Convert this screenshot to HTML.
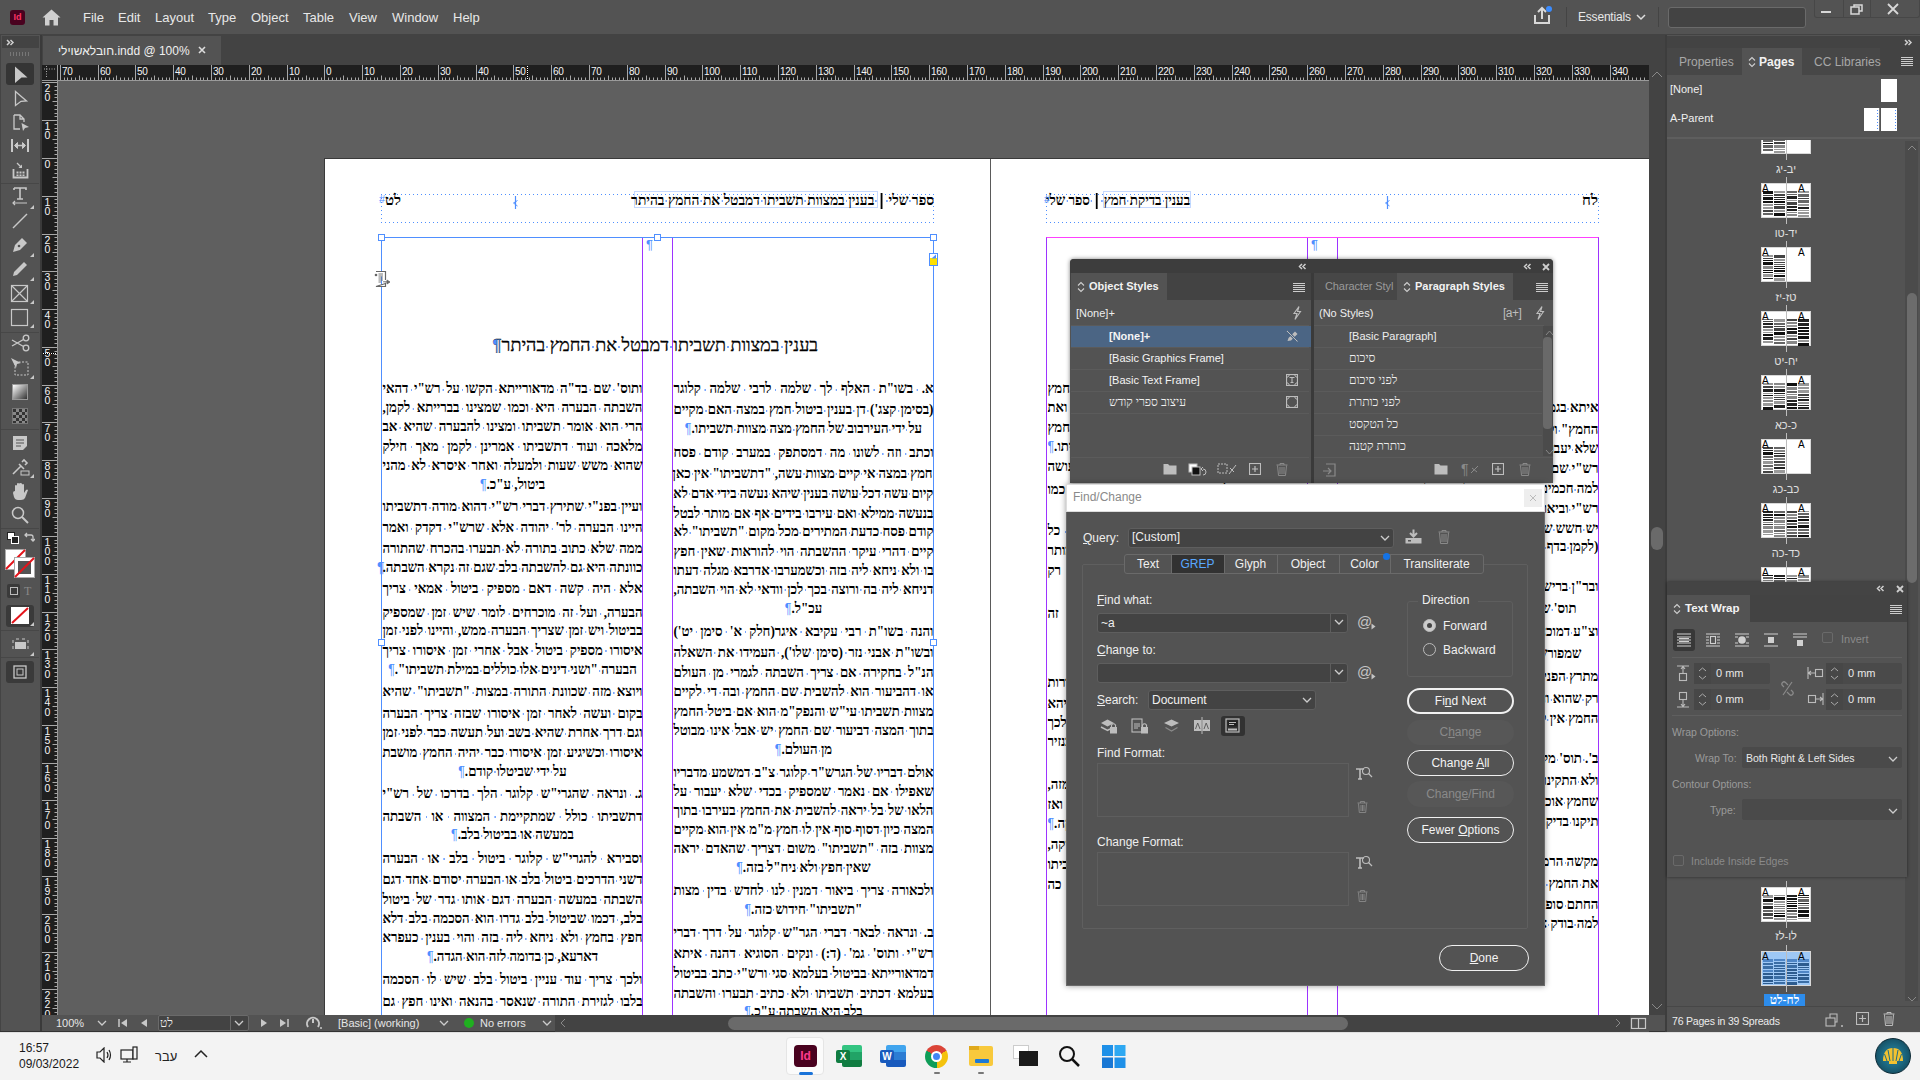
<!DOCTYPE html><html><head><meta charset="utf-8"><style>
*{box-sizing:border-box;margin:0;padding:0}
html,body{width:1920px;height:1080px;overflow:hidden;background:#5f5f5f;font-family:"Liberation Sans",sans-serif;}
.a{position:absolute}
.ui{font-family:"Liberation Sans",sans-serif;color:#e6e6e6;white-space:nowrap}
.heb{font-family:"Liberation Serif",serif;color:#000;white-space:nowrap;direction:rtl}

.dl{font-family:"Liberation Serif",serif;font-size:15px;line-height:15px;font-weight:bold;color:#000;direction:rtl;white-space:nowrap;transform-origin:100% 50%}
.sp{background:radial-gradient(circle,#7aa8ff 0 0.7px,rgba(122,168,255,0) 1.1px) 50% 62%/4px 4px no-repeat}
.pil{color:#4f8fff;font-weight:normal;font-family:"Liberation Sans",sans-serif;font-size:14px}
</style></head><body><div class="a" style="left:324px;top:158px;width:1326px;height:900px;background:#3a3a3a"></div><div class="a" style="left:325px;top:159px;width:1324px;height:900px;background:#fff"></div><div class="a" style="left:990px;top:159px;width:1px;height:860px;background:#5a5a5a"></div><div class="a" style="left:381px;top:194px;width:553px;height:1px;background:repeating-linear-gradient(90deg,#4f8fff 0 1px,transparent 1px 4px)"></div><div class="a" style="left:381px;top:222px;width:553px;height:1px;background:repeating-linear-gradient(90deg,#4f8fff 0 1px,transparent 1px 4px)"></div><div class="a" style="left:381px;top:194px;width:1px;height:29px;background:repeating-linear-gradient(180deg,#4f8fff 0 1px,transparent 1px 4px)"></div><div class="a" style="left:933px;top:194px;width:1px;height:29px;background:repeating-linear-gradient(180deg,#4f8fff 0 1px,transparent 1px 4px)"></div><svg class="a" style="left:512px;top:195px" width="8" height="15"><path d="M3.5 1 L3.5 14" stroke="#4f8fff" stroke-width="1.2"/><path d="M5.5 5.5 L1.5 8 L5.5 11" fill="none" stroke="#4f8fff" stroke-width="1"/></svg><div class="a" style="left:1046px;top:194px;width:553px;height:1px;background:repeating-linear-gradient(90deg,#4f8fff 0 1px,transparent 1px 4px)"></div><div class="a" style="left:1046px;top:222px;width:553px;height:1px;background:repeating-linear-gradient(90deg,#4f8fff 0 1px,transparent 1px 4px)"></div><div class="a" style="left:1046px;top:194px;width:1px;height:29px;background:repeating-linear-gradient(180deg,#4f8fff 0 1px,transparent 1px 4px)"></div><div class="a" style="left:1598px;top:194px;width:1px;height:29px;background:repeating-linear-gradient(180deg,#4f8fff 0 1px,transparent 1px 4px)"></div><svg class="a" style="left:1384px;top:195px" width="8" height="15"><path d="M3.5 1 L3.5 14" stroke="#4f8fff" stroke-width="1.2"/><path d="M5.5 5.5 L1.5 8 L5.5 11" fill="none" stroke="#4f8fff" stroke-width="1"/></svg><div class="a" style="left:381px;top:237px;width:553px;height:800px;border:1px solid #4f8fff;border-bottom:none"></div><div class="a" style="left:642px;top:238px;width:1px;height:790px;background:#9d33ff"></div><div class="a" style="left:672px;top:238px;width:1px;height:790px;background:#9d33ff"></div><div class="a" style="left:378px;top:234px;width:7px;height:7px;border:1px solid #4f8fff;background:#fff"></div><div class="a" style="left:654px;top:234px;width:7px;height:7px;border:1px solid #4f8fff;background:#fff"></div><div class="a" style="left:930px;top:234px;width:7px;height:7px;border:1px solid #4f8fff;background:#fff"></div><div class="a" style="left:378px;top:639px;width:7px;height:7px;border:1px solid #4f8fff;background:#fff"></div><div class="a" style="left:930px;top:639px;width:7px;height:7px;border:1px solid #4f8fff;background:#fff"></div><div class="a" style="left:929px;top:253px;width:9px;height:13px;border:1px solid #4f8fff;background:#fff"></div><div class="a" style="left:930px;top:258px;width:7px;height:7px;background:#ffe000"></div><svg class="a" style="left:931px;top:254px" width="6" height="5"><path d="M0.5 4.5 L5 0.5 L5 4.5 Z" fill="#4f8fff"/></svg><svg class="a" style="left:373px;top:270px" width="19" height="18" viewBox="0 0 19 18"><path d="M3 1.5 L12.5 1.5 L12.5 10 M12.5 13.5 L12.5 16.5 L3 16.5 Z" fill="#fff" stroke="#666" stroke-width="1.2"/><path d="M5.5 4 L10 4 M5.5 6 L10 6 M5.5 8 L10 8 M5.5 10 L10 10 M5.5 12 L8 12" stroke="#666" stroke-width="0.9"/><circle cx="3" cy="5" r="1.3" fill="#666"/><path d="M10 11.8 L14 11.8 L14 10 L17 12 L14 14 L14 12.5" fill="#666" stroke="#666" stroke-width="0.8"/></svg><div class="a" style="left:1046px;top:237px;width:553px;height:800px;border-top:1px solid #ff40ff;border-left:1px solid #9d33ff;border-right:1px solid #9d33ff"></div><div class="a" style="left:1307px;top:238px;width:1px;height:790px;background:#9d33ff"></div><div class="a" style="left:1337px;top:238px;width:1px;height:790px;background:#9d33ff"></div><div class="a dl" style="left:637.5454545454545px;top:381.2px;width:295.45454545454544px;transform:scaleX(0.8800);text-align:justify;text-align-last:justify">א.<span class="sp"> </span>בשו"ת<span class="sp"> </span>האלף<span class="sp"> </span>לך<span class="sp"> </span>שלמה<span class="sp"> </span>לרבי<span class="sp"> </span>שלמה<span class="sp"> </span>קלוגר</div><div class="a dl" style="left:637.5454545454545px;top:402.2px;width:295.45454545454544px;transform:scaleX(0.8800);text-align:justify;text-align-last:justify">(בסימן<span class="sp"> </span>קצג')<span class="sp"> </span>דן<span class="sp"> </span>בענין<span class="sp"> </span>ביטול<span class="sp"> </span>חמץ<span class="sp"> </span>במצה<span class="sp"> </span>האם<span class="sp"> </span>מקיים</div><div class="a dl" style="left:637.5454545454545px;top:421.2px;width:295.45454545454544px;transform:scaleX(0.8800);text-align:center">על<span class="sp"> </span>ידי<span class="sp"> </span>העירבוב<span class="sp"> </span>של<span class="sp"> </span>החמץ<span class="sp"> </span>מצה<span class="sp"> </span>מצוות<span class="sp"> </span>תשביתו.<span class="pil">¶</span></div><div class="a dl" style="left:637.5454545454545px;top:445.2px;width:295.45454545454544px;transform:scaleX(0.8800);text-align:justify;text-align-last:justify">וכתב<span class="sp"> </span>וזה<span class="sp"> </span>לשונו<span class="sp"> </span>מה<span class="sp"> </span>דמסתפק<span class="sp"> </span>במערב<span class="sp"> </span>קודם<span class="sp"> </span>פסח</div><div class="a dl" style="left:634.3945086705203px;top:465.7px;width:298.6054913294798px;transform:scaleX(0.8707);text-align:justify;text-align-last:justify">חמץ<span class="sp"> </span>במצה<span class="sp"> </span>אי<span class="sp"> </span>קיים<span class="sp"> </span>מצוות<span class="sp"> </span>עשה,<span class="sp"> </span>"דתשביתו"<span class="sp"> </span>אין<span class="sp"> </span>כאן</div><div class="a dl" style="left:633.6900289017341px;top:485.7px;width:299.3099710982659px;transform:scaleX(0.8687);text-align:justify;text-align-last:justify">קיום<span class="sp"> </span>עשה<span class="sp"> </span>דכל<span class="sp"> </span>עושה<span class="sp"> </span>בענין<span class="sp"> </span>שיהא<span class="sp"> </span>נעשה<span class="sp"> </span>בידי<span class="sp"> </span>אדם<span class="sp"> </span>לא</div><div class="a dl" style="left:637.5454545454545px;top:505.7px;width:295.45454545454544px;transform:scaleX(0.8800);text-align:justify;text-align-last:justify">בנעשה<span class="sp"> </span>ממילא<span class="sp"> </span>ואם<span class="sp"> </span>עירבו<span class="sp"> </span>בידים<span class="sp"> </span>אף<span class="sp"> </span>אם<span class="sp"> </span>מותר<span class="sp"> </span>לבטל</div><div class="a dl" style="left:637.5454545454545px;top:524.2px;width:295.45454545454544px;transform:scaleX(0.8800);text-align:justify;text-align-last:justify">קודם<span class="sp"> </span>פסח<span class="sp"> </span>כדעת<span class="sp"> </span>המתירים<span class="sp"> </span>מכל<span class="sp"> </span>מקום<span class="sp"> </span>"תשביתו"<span class="sp"> </span>לא</div><div class="a dl" style="left:637.5454545454545px;top:543.7px;width:295.45454545454544px;transform:scaleX(0.8800);text-align:justify;text-align-last:justify">קיים<span class="sp"> </span>דהרי<span class="sp"> </span>עיקר<span class="sp"> </span>ההשבתה<span class="sp"> </span>הוי<span class="sp"> </span>להוראות<span class="sp"> </span>שאין<span class="sp"> </span>חפץ</div><div class="a dl" style="left:637.5454545454545px;top:563.0px;width:295.45454545454544px;transform:scaleX(0.8800);text-align:justify;text-align-last:justify">בו<span class="sp"> </span>ולא<span class="sp"> </span>ניחא<span class="sp"> </span>ליה<span class="sp"> </span>בזה<span class="sp"> </span>וכשמערבו<span class="sp"> </span>אדרבא<span class="sp"> </span>מגלה<span class="sp"> </span>דעתו</div><div class="a dl" style="left:637.5454545454545px;top:581.7px;width:295.45454545454544px;transform:scaleX(0.8800);text-align:justify;text-align-last:justify">דניחא<span class="sp"> </span>ליה<span class="sp"> </span>בה<span class="sp"> </span>ורוצה<span class="sp"> </span>בכך<span class="sp"> </span>לכן<span class="sp"> </span>וודאי<span class="sp"> </span>לא<span class="sp"> </span>הוי<span class="sp"> </span>השבתה,</div><div class="a dl" style="left:637.5454545454545px;top:601.2px;width:295.45454545454544px;transform:scaleX(0.8800);text-align:center">עכ"ל.<span class="pil">¶</span></div><div class="a dl" style="left:637.5454545454545px;top:623.7px;width:295.45454545454544px;transform:scaleX(0.8800);text-align:justify;text-align-last:justify">והנה<span class="sp"> </span>בשו"ת<span class="sp"> </span>רבי<span class="sp"> </span>עקיבא<span class="sp"> </span>איגר(חלק<span class="sp"> </span>א'<span class="sp"> </span>סימן<span class="sp"> </span>יט')</div><div class="a dl" style="left:637.5454545454545px;top:644.7px;width:295.45454545454544px;transform:scaleX(0.8800);text-align:justify;text-align-last:justify">ובשו"ת<span class="sp"> </span>אבני<span class="sp"> </span>נזר<span class="sp"> </span>(סימן<span class="sp"> </span>שלו'),<span class="sp"> </span>העמידו<span class="sp"> </span>את<span class="sp"> </span>השאלה</div><div class="a dl" style="left:637.5454545454545px;top:665.2px;width:295.45454545454544px;transform:scaleX(0.8800);text-align:justify;text-align-last:justify">הנ"ל<span class="sp"> </span>בחקירה<span class="sp"> </span>אם<span class="sp"> </span>צריך<span class="sp"> </span>השבתה<span class="sp"> </span>לגמרי<span class="sp"> </span>מן<span class="sp"> </span>העולם</div><div class="a dl" style="left:637.5454545454545px;top:684.2px;width:295.45454545454544px;transform:scaleX(0.8800);text-align:justify;text-align-last:justify">או<span class="sp"> </span>דהביעור<span class="sp"> </span>הוא<span class="sp"> </span>להשבית<span class="sp"> </span>שם<span class="sp"> </span>החמץ<span class="sp"> </span>ובה<span class="sp"> </span>די<span class="sp"> </span>לקיים</div><div class="a dl" style="left:637.5454545454545px;top:703.7px;width:295.45454545454544px;transform:scaleX(0.8800);text-align:justify;text-align-last:justify">מצוות<span class="sp"> </span>תשביתו<span class="sp"> </span>עי"ש<span class="sp"> </span>והנפק"מ<span class="sp"> </span>הוא<span class="sp"> </span>אם<span class="sp"> </span>ביטל<span class="sp"> </span>החמץ</div><div class="a dl" style="left:637.5454545454545px;top:722.9000000000001px;width:295.45454545454544px;transform:scaleX(0.8800);text-align:justify;text-align-last:justify">בתוך<span class="sp"> </span>המצה<span class="sp"> </span>דביעור<span class="sp"> </span>שם<span class="sp"> </span>החמץ<span class="sp"> </span>יש<span class="sp"> </span>אבל<span class="sp"> </span>אינו<span class="sp"> </span>מבוטל</div><div class="a dl" style="left:637.5454545454545px;top:742.2px;width:295.45454545454544px;transform:scaleX(0.8800);text-align:center">מן<span class="sp"> </span>העולם.<span class="pil">¶</span></div><div class="a dl" style="left:637.5454545454545px;top:765.2px;width:295.45454545454544px;transform:scaleX(0.8800);text-align:justify;text-align-last:justify">אולם<span class="sp"> </span>דבריו<span class="sp"> </span>של<span class="sp"> </span>הגרש"ר<span class="sp"> </span>קלוגר<span class="sp"> </span>צ"ב<span class="sp"> </span>דמשמע<span class="sp"> </span>מדבריו</div><div class="a dl" style="left:637.5454545454545px;top:783.7px;width:295.45454545454544px;transform:scaleX(0.8800);text-align:justify;text-align-last:justify">שאפילו<span class="sp"> </span>אם<span class="sp"> </span>נאמר<span class="sp"> </span>שמספיק<span class="sp"> </span>בכדי<span class="sp"> </span>שלא<span class="sp"> </span>יעבור<span class="sp"> </span>על</div><div class="a dl" style="left:637.5454545454545px;top:802.9000000000001px;width:295.45454545454544px;transform:scaleX(0.8800);text-align:justify;text-align-last:justify">הלאו<span class="sp"> </span>של<span class="sp"> </span>בל<span class="sp"> </span>יראה<span class="sp"> </span>להשבית<span class="sp"> </span>את<span class="sp"> </span>החמץ<span class="sp"> </span>בעירבו<span class="sp"> </span>בתוך</div><div class="a dl" style="left:637.5454545454545px;top:822.2px;width:295.45454545454544px;transform:scaleX(0.8800);text-align:justify;text-align-last:justify">המצה<span class="sp"> </span>כיון<span class="sp"> </span>דסוף<span class="sp"> </span>סוף<span class="sp"> </span>אין<span class="sp"> </span>לו<span class="sp"> </span>חמץ<span class="sp"> </span>מ"מ<span class="sp"> </span>אין<span class="sp"> </span>הוא<span class="sp"> </span>מקיים</div><div class="a dl" style="left:637.5454545454545px;top:841.2px;width:295.45454545454544px;transform:scaleX(0.8800);text-align:justify;text-align-last:justify">מצוות<span class="sp"> </span>בזה<span class="sp"> </span>"תשביתו"<span class="sp"> </span>משום<span class="sp"> </span>דצריך<span class="sp"> </span>שהאדם<span class="sp"> </span>יראה</div><div class="a dl" style="left:637.5454545454545px;top:859.8000000000001px;width:295.45454545454544px;transform:scaleX(0.8800);text-align:center">שאין<span class="sp"> </span>חפץ<span class="sp"> </span>ולא<span class="sp"> </span>ניח"ל<span class="sp"> </span>בזה.<span class="pil">¶</span></div><div class="a dl" style="left:637.5454545454545px;top:882.7px;width:295.45454545454544px;transform:scaleX(0.8800);text-align:justify;text-align-last:justify">ולכאורה<span class="sp"> </span>צריך<span class="sp"> </span>ביאור<span class="sp"> </span>דמנין<span class="sp"> </span>לנו<span class="sp"> </span>לחדש<span class="sp"> </span>בדין<span class="sp"> </span>מצות</div><div class="a dl" style="left:637.5454545454545px;top:901.7px;width:295.45454545454544px;transform:scaleX(0.8800);text-align:center">"תשביתו"<span class="sp"> </span>חידוש<span class="sp"> </span>כזה.<span class="pil">¶</span></div><div class="a dl" style="left:637.5454545454545px;top:924.8000000000001px;width:295.45454545454544px;transform:scaleX(0.8800);text-align:justify;text-align-last:justify">ב.<span class="sp"> </span>ונראה<span class="sp"> </span>לבאר<span class="sp"> </span>דברי<span class="sp"> </span>הגר"ש<span class="sp"> </span>קלוגר<span class="sp"> </span>על<span class="sp"> </span>דרך<span class="sp"> </span>דברי</div><div class="a dl" style="left:637.5454545454545px;top:946.2px;width:295.45454545454544px;transform:scaleX(0.8800);text-align:justify;text-align-last:justify">רש"י<span class="sp"> </span>ותוס'<span class="sp"> </span>גמ'<span class="sp"> </span>(ד:)<span class="sp"> </span>ונקים<span class="sp"> </span>הסוגיא<span class="sp"> </span>דהנה<span class="sp"> </span>איתא</div><div class="a dl" style="left:637.5454545454545px;top:965.7px;width:295.45454545454544px;transform:scaleX(0.8800);text-align:justify;text-align-last:justify">דמדאורייתא<span class="sp"> </span>בביטול<span class="sp"> </span>בעלמא<span class="sp"> </span>סגי<span class="sp"> </span>ורש"י<span class="sp"> </span>כתב<span class="sp"> </span>בביטול</div><div class="a dl" style="left:637.5454545454545px;top:985.9000000000001px;width:295.45454545454544px;transform:scaleX(0.8800);text-align:justify;text-align-last:justify">בעלמא<span class="sp"> </span>דכתיב<span class="sp"> </span>תשביתו<span class="sp"> </span>ולא<span class="sp"> </span>כתיב<span class="sp"> </span>תבערו<span class="sp"> </span>והשבתה</div><div class="a dl" style="left:637.5454545454545px;top:1003.7px;width:295.45454545454544px;transform:scaleX(0.8800);text-align:center">בלב<span class="sp"> </span>היא<span class="sp"> </span>השבתה<span class="sp"> </span>ע"כ.<span class="pil">¶</span></div><div class="a dl" style="left:346.54545454545456px;top:381.2px;width:295.45454545454544px;transform:scaleX(0.8800);text-align:justify;text-align-last:justify">ותוס'<span class="sp"> </span>שם<span class="sp"> </span>בד"ה<span class="sp"> </span>מדאורייתא<span class="sp"> </span>הקשו<span class="sp"> </span>על<span class="sp"> </span>רש"י<span class="sp"> </span>דהאי</div><div class="a dl" style="left:346.54545454545456px;top:400.2px;width:295.45454545454544px;transform:scaleX(0.8800);text-align:justify;text-align-last:justify">השבתה<span class="sp"> </span>הבערה<span class="sp"> </span>היא<span class="sp"> </span>וכמו<span class="sp"> </span>שמצינו<span class="sp"> </span>בברייתא<span class="sp"> </span>לקמן,</div><div class="a dl" style="left:346.54545454545456px;top:419.2px;width:295.45454545454544px;transform:scaleX(0.8800);text-align:justify;text-align-last:justify">הרי<span class="sp"> </span>הוא<span class="sp"> </span>אומר<span class="sp"> </span>תשביתו<span class="sp"> </span>ומצינו<span class="sp"> </span>להבערה<span class="sp"> </span>שהיא<span class="sp"> </span>אב</div><div class="a dl" style="left:346.54545454545456px;top:438.7px;width:295.45454545454544px;transform:scaleX(0.8800);text-align:justify;text-align-last:justify">מלאכה<span class="sp"> </span>ועוד<span class="sp"> </span>דתשביתו<span class="sp"> </span>אמרינן<span class="sp"> </span>לקמן<span class="sp"> </span>מאך<span class="sp"> </span>חילק</div><div class="a dl" style="left:346.54545454545456px;top:457.7px;width:295.45454545454544px;transform:scaleX(0.8800);text-align:justify;text-align-last:justify">שהוא<span class="sp"> </span>משש<span class="sp"> </span>שעות<span class="sp"> </span>ולמעלה<span class="sp"> </span>ואחר<span class="sp"> </span>איסרא<span class="sp"> </span>לא<span class="sp"> </span>מהני</div><div class="a dl" style="left:346.54545454545456px;top:477.2px;width:295.45454545454544px;transform:scaleX(0.8800);text-align:center">ביטול,<span class="sp"> </span>ע"כ.<span class="pil">¶</span></div><div class="a dl" style="left:346.54545454545456px;top:499.2px;width:295.45454545454544px;transform:scaleX(0.8800);text-align:justify;text-align-last:justify">ועיין<span class="sp"> </span>בפנ"י<span class="sp"> </span>שתירץ<span class="sp"> </span>דברי<span class="sp"> </span>רש"י<span class="sp"> </span>דהוא<span class="sp"> </span>מודה<span class="sp"> </span>דתשביתו</div><div class="a dl" style="left:346.54545454545456px;top:520.2px;width:295.45454545454544px;transform:scaleX(0.8800);text-align:justify;text-align-last:justify">היינו<span class="sp"> </span>הבערה<span class="sp"> </span>לר'<span class="sp"> </span>יהודה<span class="sp"> </span>אלא<span class="sp"> </span>שרש"י<span class="sp"> </span>דקדק<span class="sp"> </span>ואמר</div><div class="a dl" style="left:346.54545454545456px;top:541.2px;width:295.45454545454544px;transform:scaleX(0.8800);text-align:justify;text-align-last:justify">ממה<span class="sp"> </span>שלא<span class="sp"> </span>כתוב<span class="sp"> </span>בתורה<span class="sp"> </span>לא<span class="sp"> </span>תבערו<span class="sp"> </span>בהכרח<span class="sp"> </span>שהתורה</div><div class="a dl" style="left:346.54545454545456px;top:560.2px;width:295.45454545454544px;transform:scaleX(0.8800);text-align:justify;text-align-last:justify">כוונתה<span class="sp"> </span>היא<span class="sp"> </span>גם<span class="sp"> </span>להשבתה<span class="sp"> </span>בלב<span class="sp"> </span>שגם<span class="sp"> </span>זה<span class="sp"> </span>נקרא<span class="sp"> </span>השבתה.</div><div class="a dl" style="left:346.54545454545456px;top:581.2px;width:295.45454545454544px;transform:scaleX(0.8800);text-align:justify;text-align-last:justify">אלא<span class="sp"> </span>היה<span class="sp"> </span>קשה<span class="sp"> </span>דאם<span class="sp"> </span>מספיק<span class="sp"> </span>ביטול<span class="sp"> </span>אמאי<span class="sp"> </span>צריך</div><div class="a dl" style="left:346.54545454545456px;top:605.2px;width:295.45454545454544px;transform:scaleX(0.8800);text-align:justify;text-align-last:justify">הבערה,<span class="sp"> </span>ועל<span class="sp"> </span>זה<span class="sp"> </span>מוכרחים<span class="sp"> </span>לומר<span class="sp"> </span>שיש<span class="sp"> </span>זמן<span class="sp"> </span>שמספיק</div><div class="a dl" style="left:346.54545454545456px;top:623.2px;width:295.45454545454544px;transform:scaleX(0.8800);text-align:justify;text-align-last:justify">בביטול<span class="sp"> </span>ויש<span class="sp"> </span>זמן<span class="sp"> </span>שצריך<span class="sp"> </span>הבערה<span class="sp"> </span>ממש,<span class="sp"> </span>והיינו<span class="sp"> </span>לפני<span class="sp"> </span>זמן</div><div class="a dl" style="left:346.54545454545456px;top:642.9000000000001px;width:295.45454545454544px;transform:scaleX(0.8800);text-align:justify;text-align-last:justify">איסורו<span class="sp"> </span>מספיק<span class="sp"> </span>ביטול<span class="sp"> </span>אבל<span class="sp"> </span>אחרי<span class="sp"> </span>זמן<span class="sp"> </span>איסורו<span class="sp"> </span>צריך</div><div class="a dl" style="left:346.54545454545456px;top:662.2px;width:295.45454545454544px;transform:scaleX(0.8800);text-align:center">הבערה<span class="sp"> </span>"ושני<span class="sp"> </span>דינים<span class="sp"> </span>אלו<span class="sp"> </span>כוללים<span class="sp"> </span>במילת<span class="sp"> </span>תשביתו".<span class="pil">¶</span></div><div class="a dl" style="left:346.54545454545456px;top:684.2px;width:295.45454545454544px;transform:scaleX(0.8800);text-align:justify;text-align-last:justify">ויוצא<span class="sp"> </span>מזה<span class="sp"> </span>שכוונת<span class="sp"> </span>התורה<span class="sp"> </span>במצות<span class="sp"> </span>"תשביתו"<span class="sp"> </span>שהיא</div><div class="a dl" style="left:346.54545454545456px;top:705.7px;width:295.45454545454544px;transform:scaleX(0.8800);text-align:justify;text-align-last:justify">בקום<span class="sp"> </span>ועשה<span class="sp"> </span>לאחר<span class="sp"> </span>זמן<span class="sp"> </span>איסורו<span class="sp"> </span>שבזה<span class="sp"> </span>צריך<span class="sp"> </span>הבערה</div><div class="a dl" style="left:346.54545454545456px;top:725.2px;width:295.45454545454544px;transform:scaleX(0.8800);text-align:justify;text-align-last:justify">וגם<span class="sp"> </span>דרך<span class="sp"> </span>אחרת<span class="sp"> </span>שהיא<span class="sp"> </span>בשב<span class="sp"> </span>ועל<span class="sp"> </span>תעשה<span class="sp"> </span>כבר<span class="sp"> </span>לפני<span class="sp"> </span>זמן</div><div class="a dl" style="left:346.54545454545456px;top:745.2px;width:295.45454545454544px;transform:scaleX(0.8800);text-align:justify;text-align-last:justify">איסורו<span class="sp"> </span>וכשיגיע<span class="sp"> </span>זמן<span class="sp"> </span>איסורו<span class="sp"> </span>כבר<span class="sp"> </span>יהיה<span class="sp"> </span>החמץ<span class="sp"> </span>מושבת</div><div class="a dl" style="left:346.54545454545456px;top:763.7px;width:295.45454545454544px;transform:scaleX(0.8800);text-align:center">על<span class="sp"> </span>ידי<span class="sp"> </span>שביטלו<span class="sp"> </span>קודם.<span class="pil">¶</span></div><div class="a dl" style="left:346.54545454545456px;top:786.2px;width:295.45454545454544px;transform:scaleX(0.8800);text-align:justify;text-align-last:justify">ג.<span class="sp"> </span>ונראה<span class="sp"> </span>שהגרי"ש<span class="sp"> </span>קלוגר<span class="sp"> </span>הלך<span class="sp"> </span>בדרכו<span class="sp"> </span>של<span class="sp"> </span>רש"י</div><div class="a dl" style="left:346.54545454545456px;top:808.8000000000001px;width:295.45454545454544px;transform:scaleX(0.8800);text-align:justify;text-align-last:justify">דתשביתו<span class="sp"> </span>כולל<span class="sp"> </span>שמתקיימת<span class="sp"> </span>המצווה<span class="sp"> </span>או<span class="sp"> </span>השבתה</div><div class="a dl" style="left:346.54545454545456px;top:827.2px;width:295.45454545454544px;transform:scaleX(0.8800);text-align:center">במעשה<span class="sp"> </span>או<span class="sp"> </span>בביטול<span class="sp"> </span>בלב.<span class="pil">¶</span></div><div class="a dl" style="left:346.54545454545456px;top:850.7px;width:295.45454545454544px;transform:scaleX(0.8800);text-align:justify;text-align-last:justify">וסבירא<span class="sp"> </span>להגרי"ש<span class="sp"> </span>קלוגר<span class="sp"> </span>ביטול<span class="sp"> </span>בלב<span class="sp"> </span>או<span class="sp"> </span>הבערה</div><div class="a dl" style="left:346.54545454545456px;top:872.2px;width:295.45454545454544px;transform:scaleX(0.8800);text-align:justify;text-align-last:justify">דשני<span class="sp"> </span>הדרכים<span class="sp"> </span>ביטול<span class="sp"> </span>בלב<span class="sp"> </span>או<span class="sp"> </span>הבערה<span class="sp"> </span>יסודם<span class="sp"> </span>אחד<span class="sp"> </span>דגם</div><div class="a dl" style="left:346.54545454545456px;top:891.9000000000001px;width:295.45454545454544px;transform:scaleX(0.8800);text-align:justify;text-align-last:justify">השבתה<span class="sp"> </span>במעשה<span class="sp"> </span>הבערה<span class="sp"> </span>דגם<span class="sp"> </span>אותו<span class="sp"> </span>גדר<span class="sp"> </span>של<span class="sp"> </span>ביטול</div><div class="a dl" style="left:346.54545454545456px;top:911.2px;width:295.45454545454544px;transform:scaleX(0.8800);text-align:justify;text-align-last:justify">בלב,<span class="sp"> </span>דכמו<span class="sp"> </span>שביטול<span class="sp"> </span>בלב<span class="sp"> </span>גדרו<span class="sp"> </span>הוא<span class="sp"> </span>הסכמה<span class="sp"> </span>בלב<span class="sp"> </span>דלא</div><div class="a dl" style="left:346.54545454545456px;top:930.2px;width:295.45454545454544px;transform:scaleX(0.8800);text-align:justify;text-align-last:justify">חפץ<span class="sp"> </span>בחמץ<span class="sp"> </span>ולא<span class="sp"> </span>ניחא<span class="sp"> </span>ליה<span class="sp"> </span>בזה<span class="sp"> </span>והוי<span class="sp"> </span>בענין<span class="sp"> </span>כעפרא</div><div class="a dl" style="left:346.54545454545456px;top:949.2px;width:295.45454545454544px;transform:scaleX(0.8800);text-align:center">דארעא,<span class="sp"> </span>כן<span class="sp"> </span>בדומה<span class="sp"> </span>לזה<span class="sp"> </span>הוא<span class="sp"> </span>הגדה.<span class="pil">¶</span></div><div class="a dl" style="left:346.54545454545456px;top:971.7px;width:295.45454545454544px;transform:scaleX(0.8800);text-align:justify;text-align-last:justify">ולכך<span class="sp"> </span>צריך<span class="sp"> </span>עוד<span class="sp"> </span>עניין<span class="sp"> </span>ביטול<span class="sp"> </span>בלב<span class="sp"> </span>שיש<span class="sp"> </span>לו<span class="sp"> </span>הסכמה</div><div class="a dl" style="left:346.54545454545456px;top:993.7px;width:295.45454545454544px;transform:scaleX(0.8800);text-align:justify;text-align-last:justify">בלבו<span class="sp"> </span>לגזירת<span class="sp"> </span>התורה<span class="sp"> </span>שנאסר<span class="sp"> </span>בהנאה<span class="sp"> </span>ואינו<span class="sp"> </span>חפץ<span class="sp"> </span>גם</div><div class="a" style="left:418px;top:336px;width:400px;text-align:right;font-family:'Liberation Serif';font-size:18px;line-height:18px;font-weight:normal;color:#000;direction:rtl;white-space:nowrap;-webkit-text-stroke:0.3px #000">בענין<span class="sp"> </span>במצוות<span class="sp"> </span>תשביתו<span class="sp"> </span>דמבטל<span class="sp"> </span>את<span class="sp"> </span>החמץ<span class="sp"> </span>בהיתר<span class="pil" style="font-size:17px">¶</span></div><div class="a" style="left:634px;top:191px;width:244px;height:17px;border:1px solid #c5d8ff"></div><div class="a" style="left:580px;top:193px;width:354px;text-align:right;font-family:'Liberation Serif';font-size:15px;line-height:15px;color:#000;direction:rtl;white-space:nowrap;font-weight:bold;transform:scaleX(0.92);transform-origin:100% 50%">ספר<span class="sp"> </span>שלי<span class="sp"> </span><span style="display:inline-block;width:2px;height:16px;background:#000;vertical-align:-4px;margin:0 3px"></span><span class="sp"> </span>בענין<span class="sp"> </span>במצוות<span class="sp"> </span>תשביתו<span class="sp"> </span>דמבטל<span class="sp"> </span>את<span class="sp"> </span>החמץ<span class="sp"> </span>בהיתר</div><div class="a" style="left:385px;top:193px;font-family:'Liberation Serif';font-size:15px;line-height:15px;color:#000;direction:rtl;white-space:nowrap;font-weight:bold;">לט</div><div class="a ui" style="left:379px;top:194px;font-size:11px;line-height:11px;color:#4f8fff">#</div><div class="a" style="left:1103px;top:191px;width:88px;height:17px;border:1px solid #c5d8ff"></div><div class="a" style="left:1046px;top:193px;width:170px;text-align:left;font-family:'Liberation Serif';font-size:15px;line-height:15px;color:#000;direction:rtl;white-space:nowrap;font-weight:bold;transform:scaleX(0.89);transform-origin:0 50%">בענין<span class="sp"> </span>בדיקת<span class="sp"> </span>חמץ<span class="sp"> </span><span style="display:inline-block;width:2px;height:16px;background:#000;vertical-align:-4px;margin:0 3px"></span><span class="sp"> </span>ספר<span class="sp"> </span>שלי</div><div class="a" style="left:1560px;top:193px;width:38px;text-align:right;font-family:'Liberation Serif';font-size:15px;line-height:15px;color:#000;direction:rtl;white-space:nowrap;font-weight:bold;">לח</div><div class="a ui" style="left:1044px;top:194px;font-size:11px;line-height:11px;color:#4f8fff">#</div><div class="a pil" style="left:646px;top:238px;font-size:13px;line-height:13px">¶</div><div class="a pil" style="left:1311px;top:238px;font-size:13px;line-height:13px">¶</div><div class="a pil" style="left:377px;top:560px;font-size:14px;line-height:14px">¶</div><div class="a dl" style="left:1011.5454545454545px;top:381.2px;width:295.45454545454544px;transform:scaleX(0.88);text-align:justify;text-align-last:justify;overflow:hidden">כל<span class="sp"> </span>ביטול<span class="sp"> </span>בלב<span class="sp"> </span>ואין<span class="sp"> </span>צריך<span class="sp"> </span>לבדוק<span class="sp"> </span>את<span class="sp"> </span>החמץ</div><div class="a dl" style="left:1011.5454545454545px;top:400.2px;width:295.45454545454544px;transform:scaleX(0.88);text-align:justify;text-align-last:justify;overflow:hidden">ובאמת<span class="sp"> </span>כבר<span class="sp"> </span>הקשו<span class="sp"> </span>על<span class="sp"> </span>זה<span class="sp"> </span>דהיכי<span class="sp"> </span>מהני<span class="sp"> </span>ואת</div><div class="a dl" style="left:1011.5454545454545px;top:420.2px;width:295.45454545454544px;transform:scaleX(0.88);text-align:justify;text-align-last:justify;overflow:hidden">דמשמע<span class="sp"> </span>דאינו<span class="sp"> </span>מבטל<span class="sp"> </span>אלא<span class="sp"> </span>ידיעת<span class="sp"> </span>החמץ</div><div class="a dl" style="left:1011.5454545454545px;top:439.2px;width:295.45454545454544px;transform:scaleX(0.88);text-align:justify;text-align-last:justify;overflow:hidden">ולכן<span class="sp"> </span>צריך<span class="sp"> </span>לבדוק<span class="sp"> </span>בכל<span class="sp"> </span>מקום<span class="sp"> </span>שמכניסים<span class="sp"> </span>בו<span class="sp"> </span>תשביתו.<span class="pil">¶</span></div><div class="a dl" style="left:1011.5454545454545px;top:459.2px;width:295.45454545454544px;transform:scaleX(0.88);text-align:justify;text-align-last:justify;overflow:hidden">ויש<span class="sp"> </span>לבאר<span class="sp"> </span>דבריו<span class="sp"> </span>דאין<span class="sp"> </span>הבדיקה<span class="sp"> </span>אלא<span class="sp"> </span>דבר<span class="sp"> </span>עושה</div><div class="a dl" style="left:1011.5454545454545px;top:482.2px;width:295.45454545454544px;transform:scaleX(0.88);text-align:justify;text-align-last:justify;overflow:hidden">ועוד<span class="sp"> </span>דצריך<span class="sp"> </span>לבדוק<span class="sp"> </span>גם<span class="sp"> </span>בחורין<span class="sp"> </span>ובסדקין<span class="sp"> </span>כמו</div><div class="a dl" style="left:1011.5454545454545px;top:523.2px;width:295.45454545454544px;transform:scaleX(0.88);text-align:justify;text-align-last:justify;overflow:hidden">בביטול<span class="sp"> </span>בלב<span class="sp"> </span>סגי<span class="sp"> </span>כדאיתא<span class="sp"> </span>בגמ'<span class="sp"> </span>שם<span class="sp"> </span>ולכן<span class="sp"> </span>כל</div><div class="a dl" style="left:1011.5454545454545px;top:543.2px;width:295.45454545454544px;transform:scaleX(0.88);text-align:justify;text-align-last:justify;overflow:hidden">שאינו<span class="sp"> </span>צריך<span class="sp"> </span>לבדוק<span class="sp"> </span>אלא<span class="sp"> </span>מה<span class="sp"> </span>שהוא<span class="sp"> </span>מותר</div><div class="a dl" style="left:1011.5454545454545px;top:563.2px;width:295.45454545454544px;transform:scaleX(0.88);text-align:justify;text-align-last:justify;overflow:hidden">ולכאורה<span class="sp"> </span>צריך<span class="sp"> </span>להבין<span class="sp"> </span>מה<span class="sp"> </span>שכתבו<span class="sp"> </span>רק</div><div class="a dl" style="left:1011.5454545454545px;top:606.2px;width:295.45454545454544px;transform:scaleX(0.88);text-align:justify;text-align-last:justify;overflow:hidden">ועוד<span class="sp"> </span>יש<span class="sp"> </span>לדקדק<span class="sp"> </span>בלשון<span class="sp"> </span>הרמב"ם<span class="sp"> </span>זה</div><div class="a dl" style="left:1011.5454545454545px;top:675.2px;width:295.45454545454544px;transform:scaleX(0.88);text-align:justify;text-align-last:justify;overflow:hidden">שהקשו<span class="sp"> </span>האחרונים<span class="sp"> </span>על<span class="sp"> </span>זה<span class="sp"> </span>מכמה<span class="sp"> </span>מקורות</div><div class="a dl" style="left:1011.5454545454545px;top:696.2px;width:295.45454545454544px;transform:scaleX(0.88);text-align:justify;text-align-last:justify;overflow:hidden">ויש<span class="sp"> </span>לומר<span class="sp"> </span>דאף<span class="sp"> </span>אם<span class="sp"> </span>ביטל<span class="sp"> </span>יש<span class="sp"> </span>חשש<span class="sp"> </span>שיהא</div><div class="a dl" style="left:1011.5454545454545px;top:715.2px;width:295.45454545454544px;transform:scaleX(0.88);text-align:justify;text-align-last:justify;overflow:hidden">ובאמת<span class="sp"> </span>כבר<span class="sp"> </span>כתבו<span class="sp"> </span>הראשונים<span class="sp"> </span>לכך</div><div class="a dl" style="left:1011.5454545454545px;top:734.2px;width:295.45454545454544px;transform:scaleX(0.88);text-align:justify;text-align-last:justify;overflow:hidden">כדברי<span class="sp"> </span>הגמרא<span class="sp"> </span>בפרק<span class="sp"> </span>ראשון<span class="sp"> </span>בנזיר</div><div class="a dl" style="left:1047px;top:755.2px;width:295.45454545454544px;transform:scaleX(0.88);text-align:center">ועיין<span class="sp"> </span>בדבריו<span class="sp"> </span>שם.<span class="pil">¶</span></div><div class="a dl" style="left:1011.5454545454545px;top:777.2px;width:295.45454545454544px;transform:scaleX(0.88);text-align:justify;text-align-last:justify;overflow:hidden">ונראה<span class="sp"> </span>לומר<span class="sp"> </span>בזה<span class="sp"> </span>דאין<span class="sp"> </span>ראיה<span class="sp"> </span>מזה,</div><div class="a dl" style="left:1011.5454545454545px;top:797.2px;width:295.45454545454544px;transform:scaleX(0.88);text-align:justify;text-align-last:justify;overflow:hidden">דהנה<span class="sp"> </span>בבדיקה<span class="sp"> </span>יש<span class="sp"> </span>שני<span class="sp"> </span>ענינים<span class="sp"> </span>ואז</div><div class="a dl" style="left:1011.5454545454545px;top:816.2px;width:295.45454545454544px;transform:scaleX(0.88);text-align:justify;text-align-last:justify;overflow:hidden">דצריך<span class="sp"> </span>ביטול<span class="sp"> </span>גם<span class="sp"> </span>אחר<span class="sp"> </span>הבדיקה.<span class="pil">¶</span></div><div class="a dl" style="left:1011.5454545454545px;top:837.2px;width:295.45454545454544px;transform:scaleX(0.88);text-align:justify;text-align-last:justify;overflow:hidden">ולכן<span class="sp"> </span>אין<span class="sp"> </span>לפטור<span class="sp"> </span>עצמו<span class="sp"> </span>מן<span class="sp"> </span>הבדיקה,</div><div class="a dl" style="left:1011.5454545454545px;top:857.2px;width:295.45454545454544px;transform:scaleX(0.88);text-align:justify;text-align-last:justify;overflow:hidden">ולכאורה<span class="sp"> </span>זהו<span class="sp"> </span>פשטות<span class="sp"> </span>דברי<span class="sp"> </span>התורה<span class="sp"> </span>תשביתו</div><div class="a dl" style="left:1011.5454545454545px;top:877.2px;width:295.45454545454544px;transform:scaleX(0.88);text-align:justify;text-align-last:justify;overflow:hidden">וכן<span class="sp"> </span>נראה<span class="sp"> </span>מדברי<span class="sp"> </span>הגמרא<span class="sp"> </span>כה</div><div class="a dl" style="left:1302.5454545454545px;top:400.2px;width:295.45454545454544px;transform:scaleX(0.88);text-align:right;overflow:hidden">איתא<span class="sp"> </span>בגמרא<span class="sp"> </span>דבדיקת<span class="sp"> </span>חמץ<span class="sp"> </span>מדרבנן</div><div class="a dl" style="left:1302.5454545454545px;top:422.2px;width:295.45454545454544px;transform:scaleX(0.88);text-align:right;overflow:hidden">החמץ"<span class="sp"> </span>ולמה<span class="sp"> </span>צריך<span class="sp"> </span>לבדוק<span class="sp"> </span>אם<span class="sp"> </span>מבטל</div><div class="a dl" style="left:1302.5454545454545px;top:441.2px;width:295.45454545454544px;transform:scaleX(0.88);text-align:right;overflow:hidden">שלא<span class="sp"> </span>יעבור<span class="sp"> </span>על<span class="sp"> </span>בל<span class="sp"> </span>יראה<span class="sp"> </span>ובל<span class="sp"> </span>ימצא</div><div class="a dl" style="left:1302.5454545454545px;top:461.2px;width:295.45454545454544px;transform:scaleX(0.88);text-align:right;overflow:hidden">רש"י<span class="sp"> </span>שם<span class="sp"> </span>דאי<span class="sp"> </span>אפשר<span class="sp"> </span>לבטל<span class="sp"> </span>חמץ</div><div class="a dl" style="left:1302.5454545454545px;top:481.2px;width:295.45454545454544px;transform:scaleX(0.88);text-align:right;overflow:hidden">למה<span class="sp"> </span>חכמים<span class="sp"> </span>תיקנו<span class="sp"> </span>בדיקה<span class="sp"> </span>ולא<span class="sp"> </span>ביטול</div><div class="a dl" style="left:1302.5454545454545px;top:501.2px;width:295.45454545454544px;transform:scaleX(0.88);text-align:right;overflow:hidden">רש"י<span class="sp"> </span>וביאור<span class="sp"> </span>הדברים<span class="sp"> </span>שיש<span class="sp"> </span>לחוש</div><div class="a dl" style="left:1302.5454545454545px;top:521.2px;width:295.45454545454544px;transform:scaleX(0.88);text-align:right;overflow:hidden">יש<span class="sp"> </span>חשש<span class="sp"> </span>שמא<span class="sp"> </span>ימצא<span class="sp"> </span>חמץ<span class="sp"> </span>ויאכלנו</div><div class="a dl" style="left:1302.5454545454545px;top:539.2px;width:295.45454545454544px;transform:scaleX(0.88);text-align:right;overflow:hidden">(לקמן<span class="sp"> </span>בדף<span class="sp"> </span>י'<span class="sp"> </span>ע"ב<span class="sp"> </span>ועיין<span class="sp"> </span>שם)</div><div class="a dl" style="left:1302.5454545454545px;top:579.2px;width:295.45454545454544px;transform:scaleX(0.88);text-align:right;overflow:hidden">ובר"ן<span class="sp"> </span>בריש<span class="sp"> </span>פסחים<span class="sp"> </span>כתב<span class="sp"> </span>דמן<span class="sp"> </span>התורה</div><div class="a dl" style="left:1302.5454545454545px;top:601.2px;width:295.45454545454544px;transform:scaleX(0.88);text-align:right;padding-right:25.0px">תוס'<span class="sp"> </span>שם<span class="sp"> </span>ד"ה<span class="sp"> </span>מדאורייתא<span class="pil">¶</span></div><div class="a dl" style="left:1302.5454545454545px;top:624.2px;width:295.45454545454544px;transform:scaleX(0.88);text-align:right;overflow:hidden">וצ"ע<span class="sp"> </span>דמוכח<span class="sp"> </span>דלא<span class="sp"> </span>סגי<span class="sp"> </span>בביטול</div><div class="a dl" style="left:1302.5454545454545px;top:646.2px;width:295.45454545454544px;transform:scaleX(0.88);text-align:right;padding-right:19.3px">שמפורש<span class="sp"> </span>בגמרא<span class="sp"> </span>שם<span class="pil">¶</span></div><div class="a dl" style="left:1302.5454545454545px;top:669.2px;width:295.45454545454544px;transform:scaleX(0.88);text-align:right;overflow:hidden">מתרץ<span class="sp"> </span>הפני<span class="sp"> </span>יהושע<span class="sp"> </span>בזה<span class="sp"> </span>דלכן</div><div class="a dl" style="left:1302.5454545454545px;top:691.2px;width:295.45454545454544px;transform:scaleX(0.88);text-align:right;overflow:hidden">רק<span class="sp"> </span>שהוא<span class="sp"> </span>ודאי<span class="sp"> </span>לא<span class="sp"> </span>יעבור<span class="sp"> </span>עליו</div><div class="a dl" style="left:1302.5454545454545px;top:711.2px;width:295.45454545454544px;transform:scaleX(0.88);text-align:right;overflow:hidden">החמץ<span class="sp"> </span>אין<span class="sp"> </span>לו<span class="sp"> </span>שום<span class="sp"> </span>ביטול<span class="sp"> </span>כלל</div><div class="a dl" style="left:1302.5454545454545px;top:751.2px;width:295.45454545454544px;transform:scaleX(0.88);text-align:right;overflow:hidden">ב'.<span class="sp"> </span>תוס'<span class="sp"> </span>מקשים<span class="sp"> </span>על<span class="sp"> </span>דברי<span class="sp"> </span>רש"י</div><div class="a dl" style="left:1302.5454545454545px;top:773.2px;width:295.45454545454544px;transform:scaleX(0.88);text-align:right;overflow:hidden">ולא<span class="sp"> </span>התקינו<span class="sp"> </span>ביטול<span class="sp"> </span>בלבד<span class="sp"> </span>כדי</div><div class="a dl" style="left:1302.5454545454545px;top:794.2px;width:295.45454545454544px;transform:scaleX(0.88);text-align:right;overflow:hidden">שחמץ<span class="sp"> </span>אוכל<span class="sp"> </span>הוא<span class="sp"> </span>ודרכו<span class="sp"> </span>להמצא</div><div class="a dl" style="left:1302.5454545454545px;top:814.2px;width:295.45454545454544px;transform:scaleX(0.88);text-align:right;overflow:hidden">תיקנו<span class="sp"> </span>בדיקה<span class="sp"> </span>לכן<span class="sp"> </span>אין<span class="sp"> </span>לסמוך</div><div class="a dl" style="left:1302.5454545454545px;top:854.2px;width:295.45454545454544px;transform:scaleX(0.88);text-align:right;overflow:hidden">מקשה<span class="sp"> </span>הרמב"ן<span class="sp"> </span>על<span class="sp"> </span>דבריהם<span class="sp"> </span>שם</div><div class="a dl" style="left:1302.5454545454545px;top:876.2px;width:295.45454545454544px;transform:scaleX(0.88);text-align:right;overflow:hidden">את<span class="sp"> </span>החמץ<span class="sp"> </span>בבדיקה<span class="sp"> </span>ואח"כ<span class="sp"> </span>מבטל</div><div class="a dl" style="left:1302.5454545454545px;top:897.2px;width:295.45454545454544px;transform:scaleX(0.88);text-align:right;overflow:hidden">החתם<span class="sp"> </span>סופר<span class="sp"> </span>כתב<span class="sp"> </span>בזה<span class="sp"> </span>דמה</div><div class="a dl" style="left:1302.5454545454545px;top:916.2px;width:295.45454545454544px;transform:scaleX(0.88);text-align:right;overflow:hidden">למה<span class="sp"> </span>בודק<span class="sp"> </span>אם<span class="sp"> </span>כבר<span class="sp"> </span>ביטל</div><div class="a" style="left:0px;top:0px;width:1920px;height:35px;background:#535353;border-bottom:1px solid #434343"></div><div class="a" style="left:10px;top:10px;width:15px;height:15px;background:#49021f;border-radius:3px;color:#ff3366;font-weight:bold;font-size:9px;line-height:15px;text-align:center">Id</div><svg class="a" style="left:42px;top:9px" width="19" height="17" viewBox="0 0 19 17"><path d="M9.5 0.5 L0.5 8.5 L3 8.5 L3 16.5 L7.5 16.5 L7.5 11 L11.5 11 L11.5 16.5 L16 16.5 L16 8.5 L18.5 8.5 Z" fill="#d0d0d0"/></svg><div class="a ui" style="left:83px;top:11px;font-size:13px;line-height:1;color:#e8e8e8;">File</div><div class="a ui" style="left:118px;top:11px;font-size:13px;line-height:1;color:#e8e8e8;">Edit</div><div class="a ui" style="left:155px;top:11px;font-size:13px;line-height:1;color:#e8e8e8;">Layout</div><div class="a ui" style="left:208px;top:11px;font-size:13px;line-height:1;color:#e8e8e8;">Type</div><div class="a ui" style="left:251px;top:11px;font-size:13px;line-height:1;color:#e8e8e8;">Object</div><div class="a ui" style="left:303px;top:11px;font-size:13px;line-height:1;color:#e8e8e8;">Table</div><div class="a ui" style="left:349px;top:11px;font-size:13px;line-height:1;color:#e8e8e8;">View</div><div class="a ui" style="left:392px;top:11px;font-size:13px;line-height:1;color:#e8e8e8;">Window</div><div class="a ui" style="left:453px;top:11px;font-size:13px;line-height:1;color:#e8e8e8;">Help</div><svg class="a" style="left:1532px;top:6px" width="20" height="20" viewBox="0 0 20 20"><path d="M10 2 L10 13 M6 6 L10 2 L14 6 M3 9 L3 17 L17 17 L17 9" stroke="#d8d8d8" stroke-width="2" fill="none"/></svg><div class="a" style="left:1546px;top:6px;width:6px;height:6px;background:#3b8cff;border-radius:50%"></div><div class="a" style="left:1566px;top:7px;width:1px;height:20px;background:#444"></div><div class="a ui" style="left:1578px;top:11px;font-size:12px;line-height:1;color:#e8e8e8;letter-spacing:-0.2px">Essentials</div><svg class="a" style="left:1636px;top:14px" width="10" height="7" viewBox="0 0 10 7"><path d="M1 1 L5 5 L9 1" stroke="#ddd" stroke-width="1.5" fill="none"/></svg><div class="a" style="left:1658px;top:7px;width:1px;height:20px;background:#444"></div><div class="a" style="left:1668px;top:7px;width:138px;height:21px;background:#434343;border:1px solid #6a6a6a;border-radius:3px"></div><div class="a" style="left:1814px;top:0px;width:106px;height:18px;border:1px solid #474747;border-top:none;border-radius:0 0 3px 3px"></div><div class="a" style="left:1843px;top:0px;width:1px;height:18px;background:#474747"></div><div class="a" style="left:1870px;top:0px;width:1px;height:18px;background:#474747"></div><div class="a" style="left:1821px;top:11px;width:10px;height:2px;background:#d8d8d8"></div><svg class="a" style="left:1850px;top:4px" width="13" height="11" viewBox="0 0 13 11"><rect x="1" y="3" width="8" height="7" stroke="#d8d8d8" stroke-width="1.5" fill="none"/><path d="M4 3 L4 1 L12 1 L12 7 L9 7" stroke="#d8d8d8" stroke-width="1.5" fill="none"/></svg><svg class="a" style="left:1887px;top:3px" width="12" height="12" viewBox="0 0 12 12"><path d="M1 1 L11 11 M11 1 L1 11" stroke="#d8d8d8" stroke-width="1.8"/></svg><div class="a" style="left:40px;top:35px;width:1627px;height:30px;background:#434343"></div><div class="a" style="left:43px;top:36px;width:178px;height:29px;background:#535353"></div><div class="a ui" style="left:58px;top:45px;font-size:12px;line-height:1;color:#f0f0f0;"><span style="direction:rtl;unicode-bidi:embed">חובלאשוילי</span>.indd @ 100%</div><svg class="a" style="left:198px;top:46px" width="8" height="8" viewBox="0 0 8 8"><path d="M1 1 L7 7 M7 1 L1 7" stroke="#ddd" stroke-width="1.6"/></svg><div class="a" style="left:42px;top:65px;width:1607px;height:16px;background:#1f1f1f;border-bottom:1px solid #9a9a9a"></div><svg class="a" style="left:42px;top:65px" width="15" height="15" viewBox="0 0 15 15"><path d="M2 4 L13 4 M4.5 1 L4.5 13" stroke="#aaa" stroke-width="1" stroke-dasharray="1 1.5"/></svg><div class="a" style="left:57px;top:65px;width:1px;height:16px;background:#9a9a9a"></div><svg class="a" style="left:42px;top:65px" width="1607" height="15"><path d="M18.5 0 L18.5 15 M22.5 12.5 L22.5 15 M25.5 12.5 L25.5 15 M29.5 12.5 L29.5 15 M33.5 12.5 L33.5 15 M37.5 10.5 L37.5 15 M40.5 12.5 L40.5 15 M44.5 12.5 L44.5 15 M48.5 12.5 L48.5 15 M52.5 12.5 L52.5 15 M56.5 0 L56.5 15 M59.5 12.5 L59.5 15 M63.5 12.5 L63.5 15 M67.5 12.5 L67.5 15 M71.5 12.5 L71.5 15 M74.5 10.5 L74.5 15 M78.5 12.5 L78.5 15 M82.5 12.5 L82.5 15 M86.5 12.5 L86.5 15 M90.5 12.5 L90.5 15 M93.5 0 L93.5 15 M97.5 12.5 L97.5 15 M101.5 12.5 L101.5 15 M105.5 12.5 L105.5 15 M109.5 12.5 L109.5 15 M112.5 10.5 L112.5 15 M116.5 12.5 L116.5 15 M120.5 12.5 L120.5 15 M124.5 12.5 L124.5 15 M127.5 12.5 L127.5 15 M131.5 0 L131.5 15 M135.5 12.5 L135.5 15 M139.5 12.5 L139.5 15 M143.5 12.5 L143.5 15 M146.5 12.5 L146.5 15 M150.5 10.5 L150.5 15 M154.5 12.5 L154.5 15 M158.5 12.5 L158.5 15 M161.5 12.5 L161.5 15 M165.5 12.5 L165.5 15 M169.5 0 L169.5 15 M173.5 12.5 L173.5 15 M177.5 12.5 L177.5 15 M180.5 12.5 L180.5 15 M184.5 12.5 L184.5 15 M188.5 10.5 L188.5 15 M192.5 12.5 L192.5 15 M195.5 12.5 L195.5 15 M199.5 12.5 L199.5 15 M203.5 12.5 L203.5 15 M207.5 0 L207.5 15 M211.5 12.5 L211.5 15 M214.5 12.5 L214.5 15 M218.5 12.5 L218.5 15 M222.5 12.5 L222.5 15 M226.5 10.5 L226.5 15 M229.5 12.5 L229.5 15 M233.5 12.5 L233.5 15 M237.5 12.5 L237.5 15 M241.5 12.5 L241.5 15 M245.5 0 L245.5 15 M248.5 12.5 L248.5 15 M252.5 12.5 L252.5 15 M256.5 12.5 L256.5 15 M260.5 12.5 L260.5 15 M264.5 10.5 L264.5 15 M267.5 12.5 L267.5 15 M271.5 12.5 L271.5 15 M275.5 12.5 L275.5 15 M279.5 12.5 L279.5 15 M282.5 0 L282.5 15 M286.5 12.5 L286.5 15 M290.5 12.5 L290.5 15 M294.5 12.5 L294.5 15 M298.5 12.5 L298.5 15 M301.5 10.5 L301.5 15 M305.5 12.5 L305.5 15 M309.5 12.5 L309.5 15 M313.5 12.5 L313.5 15 M316.5 12.5 L316.5 15 M320.5 0 L320.5 15 M324.5 12.5 L324.5 15 M328.5 12.5 L328.5 15 M332.5 12.5 L332.5 15 M335.5 12.5 L335.5 15 M339.5 10.5 L339.5 15 M343.5 12.5 L343.5 15 M347.5 12.5 L347.5 15 M350.5 12.5 L350.5 15 M354.5 12.5 L354.5 15 M358.5 0 L358.5 15 M362.5 12.5 L362.5 15 M366.5 12.5 L366.5 15 M369.5 12.5 L369.5 15 M373.5 12.5 L373.5 15 M377.5 10.5 L377.5 15 M381.5 12.5 L381.5 15 M384.5 12.5 L384.5 15 M388.5 12.5 L388.5 15 M392.5 12.5 L392.5 15 M396.5 0 L396.5 15 M400.5 12.5 L400.5 15 M403.5 12.5 L403.5 15 M407.5 12.5 L407.5 15 M411.5 12.5 L411.5 15 M415.5 10.5 L415.5 15 M418.5 12.5 L418.5 15 M422.5 12.5 L422.5 15 M426.5 12.5 L426.5 15 M430.5 12.5 L430.5 15 M434.5 0 L434.5 15 M437.5 12.5 L437.5 15 M441.5 12.5 L441.5 15 M445.5 12.5 L445.5 15 M449.5 12.5 L449.5 15 M452.5 10.5 L452.5 15 M456.5 12.5 L456.5 15 M460.5 12.5 L460.5 15 M464.5 12.5 L464.5 15 M468.5 12.5 L468.5 15 M471.5 0 L471.5 15 M475.5 12.5 L475.5 15 M479.5 12.5 L479.5 15 M483.5 12.5 L483.5 15 M487.5 12.5 L487.5 15 M490.5 10.5 L490.5 15 M494.5 12.5 L494.5 15 M498.5 12.5 L498.5 15 M502.5 12.5 L502.5 15 M505.5 12.5 L505.5 15 M509.5 0 L509.5 15 M513.5 12.5 L513.5 15 M517.5 12.5 L517.5 15 M521.5 12.5 L521.5 15 M524.5 12.5 L524.5 15 M528.5 10.5 L528.5 15 M532.5 12.5 L532.5 15 M536.5 12.5 L536.5 15 M539.5 12.5 L539.5 15 M543.5 12.5 L543.5 15 M547.5 0 L547.5 15 M551.5 12.5 L551.5 15 M555.5 12.5 L555.5 15 M558.5 12.5 L558.5 15 M562.5 12.5 L562.5 15 M566.5 10.5 L566.5 15 M570.5 12.5 L570.5 15 M573.5 12.5 L573.5 15 M577.5 12.5 L577.5 15 M581.5 12.5 L581.5 15 M585.5 0 L585.5 15 M589.5 12.5 L589.5 15 M592.5 12.5 L592.5 15 M596.5 12.5 L596.5 15 M600.5 12.5 L600.5 15 M604.5 10.5 L604.5 15 M607.5 12.5 L607.5 15 M611.5 12.5 L611.5 15 M615.5 12.5 L615.5 15 M619.5 12.5 L619.5 15 M623.5 0 L623.5 15 M626.5 12.5 L626.5 15 M630.5 12.5 L630.5 15 M634.5 12.5 L634.5 15 M638.5 12.5 L638.5 15 M642.5 10.5 L642.5 15 M645.5 12.5 L645.5 15 M649.5 12.5 L649.5 15 M653.5 12.5 L653.5 15 M657.5 12.5 L657.5 15 M660.5 0 L660.5 15 M664.5 12.5 L664.5 15 M668.5 12.5 L668.5 15 M672.5 12.5 L672.5 15 M676.5 12.5 L676.5 15 M679.5 10.5 L679.5 15 M683.5 12.5 L683.5 15 M687.5 12.5 L687.5 15 M691.5 12.5 L691.5 15 M694.5 12.5 L694.5 15 M698.5 0 L698.5 15 M702.5 12.5 L702.5 15 M706.5 12.5 L706.5 15 M710.5 12.5 L710.5 15 M713.5 12.5 L713.5 15 M717.5 10.5 L717.5 15 M721.5 12.5 L721.5 15 M725.5 12.5 L725.5 15 M728.5 12.5 L728.5 15 M732.5 12.5 L732.5 15 M736.5 0 L736.5 15 M740.5 12.5 L740.5 15 M744.5 12.5 L744.5 15 M747.5 12.5 L747.5 15 M751.5 12.5 L751.5 15 M755.5 10.5 L755.5 15 M759.5 12.5 L759.5 15 M762.5 12.5 L762.5 15 M766.5 12.5 L766.5 15 M770.5 12.5 L770.5 15 M774.5 0 L774.5 15 M778.5 12.5 L778.5 15 M781.5 12.5 L781.5 15 M785.5 12.5 L785.5 15 M789.5 12.5 L789.5 15 M793.5 10.5 L793.5 15 M796.5 12.5 L796.5 15 M800.5 12.5 L800.5 15 M804.5 12.5 L804.5 15 M808.5 12.5 L808.5 15 M812.5 0 L812.5 15 M815.5 12.5 L815.5 15 M819.5 12.5 L819.5 15 M823.5 12.5 L823.5 15 M827.5 12.5 L827.5 15 M830.5 10.5 L830.5 15 M834.5 12.5 L834.5 15 M838.5 12.5 L838.5 15 M842.5 12.5 L842.5 15 M846.5 12.5 L846.5 15 M849.5 0 L849.5 15 M853.5 12.5 L853.5 15 M857.5 12.5 L857.5 15 M861.5 12.5 L861.5 15 M865.5 12.5 L865.5 15 M868.5 10.5 L868.5 15 M872.5 12.5 L872.5 15 M876.5 12.5 L876.5 15 M880.5 12.5 L880.5 15 M883.5 12.5 L883.5 15 M887.5 0 L887.5 15 M891.5 12.5 L891.5 15 M895.5 12.5 L895.5 15 M899.5 12.5 L899.5 15 M902.5 12.5 L902.5 15 M906.5 10.5 L906.5 15 M910.5 12.5 L910.5 15 M914.5 12.5 L914.5 15 M917.5 12.5 L917.5 15 M921.5 12.5 L921.5 15 M925.5 0 L925.5 15 M929.5 12.5 L929.5 15 M933.5 12.5 L933.5 15 M936.5 12.5 L936.5 15 M940.5 12.5 L940.5 15 M944.5 10.5 L944.5 15 M948.5 12.5 L948.5 15 M951.5 12.5 L951.5 15 M955.5 12.5 L955.5 15 M959.5 12.5 L959.5 15 M963.5 0 L963.5 15 M967.5 12.5 L967.5 15 M970.5 12.5 L970.5 15 M974.5 12.5 L974.5 15 M978.5 12.5 L978.5 15 M982.5 10.5 L982.5 15 M985.5 12.5 L985.5 15 M989.5 12.5 L989.5 15 M993.5 12.5 L993.5 15 M997.5 12.5 L997.5 15 M1001.5 0 L1001.5 15 M1004.5 12.5 L1004.5 15 M1008.5 12.5 L1008.5 15 M1012.5 12.5 L1012.5 15 M1016.5 12.5 L1016.5 15 M1020.5 10.5 L1020.5 15 M1023.5 12.5 L1023.5 15 M1027.5 12.5 L1027.5 15 M1031.5 12.5 L1031.5 15 M1035.5 12.5 L1035.5 15 M1038.5 0 L1038.5 15 M1042.5 12.5 L1042.5 15 M1046.5 12.5 L1046.5 15 M1050.5 12.5 L1050.5 15 M1054.5 12.5 L1054.5 15 M1057.5 10.5 L1057.5 15 M1061.5 12.5 L1061.5 15 M1065.5 12.5 L1065.5 15 M1069.5 12.5 L1069.5 15 M1072.5 12.5 L1072.5 15 M1076.5 0 L1076.5 15 M1080.5 12.5 L1080.5 15 M1084.5 12.5 L1084.5 15 M1088.5 12.5 L1088.5 15 M1091.5 12.5 L1091.5 15 M1095.5 10.5 L1095.5 15 M1099.5 12.5 L1099.5 15 M1103.5 12.5 L1103.5 15 M1106.5 12.5 L1106.5 15 M1110.5 12.5 L1110.5 15 M1114.5 0 L1114.5 15 M1118.5 12.5 L1118.5 15 M1122.5 12.5 L1122.5 15 M1125.5 12.5 L1125.5 15 M1129.5 12.5 L1129.5 15 M1133.5 10.5 L1133.5 15 M1137.5 12.5 L1137.5 15 M1140.5 12.5 L1140.5 15 M1144.5 12.5 L1144.5 15 M1148.5 12.5 L1148.5 15 M1152.5 0 L1152.5 15 M1156.5 12.5 L1156.5 15 M1159.5 12.5 L1159.5 15 M1163.5 12.5 L1163.5 15 M1167.5 12.5 L1167.5 15 M1171.5 10.5 L1171.5 15 M1174.5 12.5 L1174.5 15 M1178.5 12.5 L1178.5 15 M1182.5 12.5 L1182.5 15 M1186.5 12.5 L1186.5 15 M1190.5 0 L1190.5 15 M1193.5 12.5 L1193.5 15 M1197.5 12.5 L1197.5 15 M1201.5 12.5 L1201.5 15 M1205.5 12.5 L1205.5 15 M1208.5 10.5 L1208.5 15 M1212.5 12.5 L1212.5 15 M1216.5 12.5 L1216.5 15 M1220.5 12.5 L1220.5 15 M1224.5 12.5 L1224.5 15 M1227.5 0 L1227.5 15 M1231.5 12.5 L1231.5 15 M1235.5 12.5 L1235.5 15 M1239.5 12.5 L1239.5 15 M1243.5 12.5 L1243.5 15 M1246.5 10.5 L1246.5 15 M1250.5 12.5 L1250.5 15 M1254.5 12.5 L1254.5 15 M1258.5 12.5 L1258.5 15 M1261.5 12.5 L1261.5 15 M1265.5 0 L1265.5 15 M1269.5 12.5 L1269.5 15 M1273.5 12.5 L1273.5 15 M1277.5 12.5 L1277.5 15 M1280.5 12.5 L1280.5 15 M1284.5 10.5 L1284.5 15 M1288.5 12.5 L1288.5 15 M1292.5 12.5 L1292.5 15 M1295.5 12.5 L1295.5 15 M1299.5 12.5 L1299.5 15 M1303.5 0 L1303.5 15 M1307.5 12.5 L1307.5 15 M1311.5 12.5 L1311.5 15 M1314.5 12.5 L1314.5 15 M1318.5 12.5 L1318.5 15 M1322.5 10.5 L1322.5 15 M1326.5 12.5 L1326.5 15 M1329.5 12.5 L1329.5 15 M1333.5 12.5 L1333.5 15 M1337.5 12.5 L1337.5 15 M1341.5 0 L1341.5 15 M1345.5 12.5 L1345.5 15 M1348.5 12.5 L1348.5 15 M1352.5 12.5 L1352.5 15 M1356.5 12.5 L1356.5 15 M1360.5 10.5 L1360.5 15 M1363.5 12.5 L1363.5 15 M1367.5 12.5 L1367.5 15 M1371.5 12.5 L1371.5 15 M1375.5 12.5 L1375.5 15 M1379.5 0 L1379.5 15 M1382.5 12.5 L1382.5 15 M1386.5 12.5 L1386.5 15 M1390.5 12.5 L1390.5 15 M1394.5 12.5 L1394.5 15 M1398.5 10.5 L1398.5 15 M1401.5 12.5 L1401.5 15 M1405.5 12.5 L1405.5 15 M1409.5 12.5 L1409.5 15 M1413.5 12.5 L1413.5 15 M1416.5 0 L1416.5 15 M1420.5 12.5 L1420.5 15 M1424.5 12.5 L1424.5 15 M1428.5 12.5 L1428.5 15 M1432.5 12.5 L1432.5 15 M1435.5 10.5 L1435.5 15 M1439.5 12.5 L1439.5 15 M1443.5 12.5 L1443.5 15 M1447.5 12.5 L1447.5 15 M1450.5 12.5 L1450.5 15 M1454.5 0 L1454.5 15 M1458.5 12.5 L1458.5 15 M1462.5 12.5 L1462.5 15 M1466.5 12.5 L1466.5 15 M1469.5 12.5 L1469.5 15 M1473.5 10.5 L1473.5 15 M1477.5 12.5 L1477.5 15 M1481.5 12.5 L1481.5 15 M1484.5 12.5 L1484.5 15 M1488.5 12.5 L1488.5 15 M1492.5 0 L1492.5 15 M1496.5 12.5 L1496.5 15 M1500.5 12.5 L1500.5 15 M1503.5 12.5 L1503.5 15 M1507.5 12.5 L1507.5 15 M1511.5 10.5 L1511.5 15 M1515.5 12.5 L1515.5 15 M1518.5 12.5 L1518.5 15 M1522.5 12.5 L1522.5 15 M1526.5 12.5 L1526.5 15 M1530.5 0 L1530.5 15 M1534.5 12.5 L1534.5 15 M1537.5 12.5 L1537.5 15 M1541.5 12.5 L1541.5 15 M1545.5 12.5 L1545.5 15 M1549.5 10.5 L1549.5 15 M1552.5 12.5 L1552.5 15 M1556.5 12.5 L1556.5 15 M1560.5 12.5 L1560.5 15 M1564.5 12.5 L1564.5 15 M1568.5 0 L1568.5 15 M1571.5 12.5 L1571.5 15 M1575.5 12.5 L1575.5 15 M1579.5 12.5 L1579.5 15 M1583.5 12.5 L1583.5 15 M1586.5 10.5 L1586.5 15 M1590.5 12.5 L1590.5 15 M1594.5 12.5 L1594.5 15 M1598.5 12.5 L1598.5 15 M1602.5 12.5 L1602.5 15" stroke="#a8a8a8" stroke-width="1"/></svg><div class="a ui" style="left:62px;top:67px;font-size:10px;line-height:1;color:#f4f4f4;letter-spacing:-0.3px">70</div><div class="a ui" style="left:100px;top:67px;font-size:10px;line-height:1;color:#f4f4f4;letter-spacing:-0.3px">60</div><div class="a ui" style="left:137px;top:67px;font-size:10px;line-height:1;color:#f4f4f4;letter-spacing:-0.3px">50</div><div class="a ui" style="left:175px;top:67px;font-size:10px;line-height:1;color:#f4f4f4;letter-spacing:-0.3px">40</div><div class="a ui" style="left:213px;top:67px;font-size:10px;line-height:1;color:#f4f4f4;letter-spacing:-0.3px">30</div><div class="a ui" style="left:251px;top:67px;font-size:10px;line-height:1;color:#f4f4f4;letter-spacing:-0.3px">20</div><div class="a ui" style="left:289px;top:67px;font-size:10px;line-height:1;color:#f4f4f4;letter-spacing:-0.3px">10</div><div class="a ui" style="left:326px;top:67px;font-size:10px;line-height:1;color:#f4f4f4;letter-spacing:-0.3px">0</div><div class="a ui" style="left:364px;top:67px;font-size:10px;line-height:1;color:#f4f4f4;letter-spacing:-0.3px">10</div><div class="a ui" style="left:402px;top:67px;font-size:10px;line-height:1;color:#f4f4f4;letter-spacing:-0.3px">20</div><div class="a ui" style="left:440px;top:67px;font-size:10px;line-height:1;color:#f4f4f4;letter-spacing:-0.3px">30</div><div class="a ui" style="left:478px;top:67px;font-size:10px;line-height:1;color:#f4f4f4;letter-spacing:-0.3px">40</div><div class="a ui" style="left:515px;top:67px;font-size:10px;line-height:1;color:#f4f4f4;letter-spacing:-0.3px">50</div><div class="a ui" style="left:553px;top:67px;font-size:10px;line-height:1;color:#f4f4f4;letter-spacing:-0.3px">60</div><div class="a ui" style="left:591px;top:67px;font-size:10px;line-height:1;color:#f4f4f4;letter-spacing:-0.3px">70</div><div class="a ui" style="left:629px;top:67px;font-size:10px;line-height:1;color:#f4f4f4;letter-spacing:-0.3px">80</div><div class="a ui" style="left:667px;top:67px;font-size:10px;line-height:1;color:#f4f4f4;letter-spacing:-0.3px">90</div><div class="a ui" style="left:704px;top:67px;font-size:10px;line-height:1;color:#f4f4f4;letter-spacing:-0.3px">100</div><div class="a ui" style="left:742px;top:67px;font-size:10px;line-height:1;color:#f4f4f4;letter-spacing:-0.3px">110</div><div class="a ui" style="left:780px;top:67px;font-size:10px;line-height:1;color:#f4f4f4;letter-spacing:-0.3px">120</div><div class="a ui" style="left:818px;top:67px;font-size:10px;line-height:1;color:#f4f4f4;letter-spacing:-0.3px">130</div><div class="a ui" style="left:856px;top:67px;font-size:10px;line-height:1;color:#f4f4f4;letter-spacing:-0.3px">140</div><div class="a ui" style="left:893px;top:67px;font-size:10px;line-height:1;color:#f4f4f4;letter-spacing:-0.3px">150</div><div class="a ui" style="left:931px;top:67px;font-size:10px;line-height:1;color:#f4f4f4;letter-spacing:-0.3px">160</div><div class="a ui" style="left:969px;top:67px;font-size:10px;line-height:1;color:#f4f4f4;letter-spacing:-0.3px">170</div><div class="a ui" style="left:1007px;top:67px;font-size:10px;line-height:1;color:#f4f4f4;letter-spacing:-0.3px">180</div><div class="a ui" style="left:1045px;top:67px;font-size:10px;line-height:1;color:#f4f4f4;letter-spacing:-0.3px">190</div><div class="a ui" style="left:1082px;top:67px;font-size:10px;line-height:1;color:#f4f4f4;letter-spacing:-0.3px">200</div><div class="a ui" style="left:1120px;top:67px;font-size:10px;line-height:1;color:#f4f4f4;letter-spacing:-0.3px">210</div><div class="a ui" style="left:1158px;top:67px;font-size:10px;line-height:1;color:#f4f4f4;letter-spacing:-0.3px">220</div><div class="a ui" style="left:1196px;top:67px;font-size:10px;line-height:1;color:#f4f4f4;letter-spacing:-0.3px">230</div><div class="a ui" style="left:1234px;top:67px;font-size:10px;line-height:1;color:#f4f4f4;letter-spacing:-0.3px">240</div><div class="a ui" style="left:1271px;top:67px;font-size:10px;line-height:1;color:#f4f4f4;letter-spacing:-0.3px">250</div><div class="a ui" style="left:1309px;top:67px;font-size:10px;line-height:1;color:#f4f4f4;letter-spacing:-0.3px">260</div><div class="a ui" style="left:1347px;top:67px;font-size:10px;line-height:1;color:#f4f4f4;letter-spacing:-0.3px">270</div><div class="a ui" style="left:1385px;top:67px;font-size:10px;line-height:1;color:#f4f4f4;letter-spacing:-0.3px">280</div><div class="a ui" style="left:1423px;top:67px;font-size:10px;line-height:1;color:#f4f4f4;letter-spacing:-0.3px">290</div><div class="a ui" style="left:1460px;top:67px;font-size:10px;line-height:1;color:#f4f4f4;letter-spacing:-0.3px">300</div><div class="a ui" style="left:1498px;top:67px;font-size:10px;line-height:1;color:#f4f4f4;letter-spacing:-0.3px">310</div><div class="a ui" style="left:1536px;top:67px;font-size:10px;line-height:1;color:#f4f4f4;letter-spacing:-0.3px">320</div><div class="a ui" style="left:1574px;top:67px;font-size:10px;line-height:1;color:#f4f4f4;letter-spacing:-0.3px">330</div><div class="a ui" style="left:1612px;top:67px;font-size:10px;line-height:1;color:#f4f4f4;letter-spacing:-0.3px">340</div><div class="a" style="left:527px;top:66px;width:1px;height:14px;background:repeating-linear-gradient(180deg,#fff 0 1px,#000 1px 2px)"></div><div class="a" style="left:42px;top:81px;width:16px;height:934px;background:#1f1f1f;border-right:1px solid #9a9a9a"></div><div class="a ui" style="left:43px;top:84px;font-size:10.5px;line-height:9.3px;color:#f4f4f4;width:9px;text-align:center"><div>2</div><div>0</div></div><div class="a ui" style="left:43px;top:122px;font-size:10.5px;line-height:9.3px;color:#f4f4f4;width:9px;text-align:center"><div>1</div><div>0</div></div><div class="a ui" style="left:43px;top:160px;font-size:10.5px;line-height:9.3px;color:#f4f4f4;width:9px;text-align:center"><div>0</div></div><div class="a ui" style="left:43px;top:198px;font-size:10.5px;line-height:9.3px;color:#f4f4f4;width:9px;text-align:center"><div>1</div><div>0</div></div><div class="a ui" style="left:43px;top:236px;font-size:10.5px;line-height:9.3px;color:#f4f4f4;width:9px;text-align:center"><div>2</div><div>0</div></div><div class="a ui" style="left:43px;top:273px;font-size:10.5px;line-height:9.3px;color:#f4f4f4;width:9px;text-align:center"><div>3</div><div>0</div></div><div class="a ui" style="left:43px;top:311px;font-size:10.5px;line-height:9.3px;color:#f4f4f4;width:9px;text-align:center"><div>4</div><div>0</div></div><div class="a ui" style="left:43px;top:349px;font-size:10.5px;line-height:9.3px;color:#f4f4f4;width:9px;text-align:center"><div>5</div><div>0</div></div><div class="a ui" style="left:43px;top:387px;font-size:10.5px;line-height:9.3px;color:#f4f4f4;width:9px;text-align:center"><div>6</div><div>0</div></div><div class="a ui" style="left:43px;top:424px;font-size:10.5px;line-height:9.3px;color:#f4f4f4;width:9px;text-align:center"><div>7</div><div>0</div></div><div class="a ui" style="left:43px;top:462px;font-size:10.5px;line-height:9.3px;color:#f4f4f4;width:9px;text-align:center"><div>8</div><div>0</div></div><div class="a ui" style="left:43px;top:500px;font-size:10.5px;line-height:9.3px;color:#f4f4f4;width:9px;text-align:center"><div>9</div><div>0</div></div><div class="a ui" style="left:43px;top:538px;font-size:10.5px;line-height:9.3px;color:#f4f4f4;width:9px;text-align:center"><div>1</div><div>0</div><div>0</div></div><div class="a ui" style="left:43px;top:576px;font-size:10.5px;line-height:9.3px;color:#f4f4f4;width:9px;text-align:center"><div>1</div><div>1</div><div>0</div></div><div class="a ui" style="left:43px;top:614px;font-size:10.5px;line-height:9.3px;color:#f4f4f4;width:9px;text-align:center"><div>1</div><div>2</div><div>0</div></div><div class="a ui" style="left:43px;top:651px;font-size:10.5px;line-height:9.3px;color:#f4f4f4;width:9px;text-align:center"><div>1</div><div>3</div><div>0</div></div><div class="a ui" style="left:43px;top:689px;font-size:10.5px;line-height:9.3px;color:#f4f4f4;width:9px;text-align:center"><div>1</div><div>4</div><div>0</div></div><div class="a ui" style="left:43px;top:727px;font-size:10.5px;line-height:9.3px;color:#f4f4f4;width:9px;text-align:center"><div>1</div><div>5</div><div>0</div></div><div class="a ui" style="left:43px;top:765px;font-size:10.5px;line-height:9.3px;color:#f4f4f4;width:9px;text-align:center"><div>1</div><div>6</div><div>0</div></div><div class="a ui" style="left:43px;top:802px;font-size:10.5px;line-height:9.3px;color:#f4f4f4;width:9px;text-align:center"><div>1</div><div>7</div><div>0</div></div><div class="a ui" style="left:43px;top:840px;font-size:10.5px;line-height:9.3px;color:#f4f4f4;width:9px;text-align:center"><div>1</div><div>8</div><div>0</div></div><div class="a ui" style="left:43px;top:878px;font-size:10.5px;line-height:9.3px;color:#f4f4f4;width:9px;text-align:center"><div>1</div><div>9</div><div>0</div></div><div class="a ui" style="left:43px;top:916px;font-size:10.5px;line-height:9.3px;color:#f4f4f4;width:9px;text-align:center"><div>2</div><div>0</div><div>0</div></div><div class="a ui" style="left:43px;top:954px;font-size:10.5px;line-height:9.3px;color:#f4f4f4;width:9px;text-align:center"><div>2</div><div>1</div><div>0</div></div><div class="a ui" style="left:43px;top:991px;font-size:10.5px;line-height:9.3px;color:#f4f4f4;width:9px;text-align:center"><div>2</div><div>2</div><div>0</div></div><div class="a" style="left:43px;top:353px;width:14px;height:1px;background:repeating-linear-gradient(90deg,#fff 0 1px,#000 1px 2px)"></div><svg class="a" style="left:42px;top:81px" width="15" height="934"><path d="M0 1.5 L15 1.5 M12.5 5.5 L15 5.5 M12.5 9.5 L15 9.5 M12.5 13.5 L15 13.5 M12.5 16.5 L15 16.5 M10.5 20.5 L15 20.5 M12.5 24.5 L15 24.5 M12.5 28.5 L15 28.5 M12.5 32.5 L15 32.5 M12.5 35.5 L15 35.5 M0 39.5 L15 39.5 M12.5 43.5 L15 43.5 M12.5 47.5 L15 47.5 M12.5 50.5 L15 50.5 M12.5 54.5 L15 54.5 M10.5 58.5 L15 58.5 M12.5 62.5 L15 62.5 M12.5 66.5 L15 66.5 M12.5 69.5 L15 69.5 M12.5 73.5 L15 73.5 M0 77.5 L15 77.5 M12.5 81.5 L15 81.5 M12.5 84.5 L15 84.5 M12.5 88.5 L15 88.5 M12.5 92.5 L15 92.5 M10.5 96.5 L15 96.5 M12.5 100.5 L15 100.5 M12.5 103.5 L15 103.5 M12.5 107.5 L15 107.5 M12.5 111.5 L15 111.5 M0 115.5 L15 115.5 M12.5 118.5 L15 118.5 M12.5 122.5 L15 122.5 M12.5 126.5 L15 126.5 M12.5 130.5 L15 130.5 M10.5 134.5 L15 134.5 M12.5 137.5 L15 137.5 M12.5 141.5 L15 141.5 M12.5 145.5 L15 145.5 M12.5 149.5 L15 149.5 M0 153.5 L15 153.5 M12.5 156.5 L15 156.5 M12.5 160.5 L15 160.5 M12.5 164.5 L15 164.5 M12.5 168.5 L15 168.5 M10.5 171.5 L15 171.5 M12.5 175.5 L15 175.5 M12.5 179.5 L15 179.5 M12.5 183.5 L15 183.5 M12.5 187.5 L15 187.5 M0 190.5 L15 190.5 M12.5 194.5 L15 194.5 M12.5 198.5 L15 198.5 M12.5 202.5 L15 202.5 M12.5 205.5 L15 205.5 M10.5 209.5 L15 209.5 M12.5 213.5 L15 213.5 M12.5 217.5 L15 217.5 M12.5 221.5 L15 221.5 M12.5 224.5 L15 224.5 M0 228.5 L15 228.5 M12.5 232.5 L15 232.5 M12.5 236.5 L15 236.5 M12.5 239.5 L15 239.5 M12.5 243.5 L15 243.5 M10.5 247.5 L15 247.5 M12.5 251.5 L15 251.5 M12.5 255.5 L15 255.5 M12.5 258.5 L15 258.5 M12.5 262.5 L15 262.5 M0 266.5 L15 266.5 M12.5 270.5 L15 270.5 M12.5 273.5 L15 273.5 M12.5 277.5 L15 277.5 M12.5 281.5 L15 281.5 M10.5 285.5 L15 285.5 M12.5 289.5 L15 289.5 M12.5 292.5 L15 292.5 M12.5 296.5 L15 296.5 M12.5 300.5 L15 300.5 M0 304.5 L15 304.5 M12.5 307.5 L15 307.5 M12.5 311.5 L15 311.5 M12.5 315.5 L15 315.5 M12.5 319.5 L15 319.5 M10.5 323.5 L15 323.5 M12.5 326.5 L15 326.5 M12.5 330.5 L15 330.5 M12.5 334.5 L15 334.5 M12.5 338.5 L15 338.5 M0 341.5 L15 341.5 M12.5 345.5 L15 345.5 M12.5 349.5 L15 349.5 M12.5 353.5 L15 353.5 M12.5 357.5 L15 357.5 M10.5 360.5 L15 360.5 M12.5 364.5 L15 364.5 M12.5 368.5 L15 368.5 M12.5 372.5 L15 372.5 M12.5 376.5 L15 376.5 M0 379.5 L15 379.5 M12.5 383.5 L15 383.5 M12.5 387.5 L15 387.5 M12.5 391.5 L15 391.5 M12.5 394.5 L15 394.5 M10.5 398.5 L15 398.5 M12.5 402.5 L15 402.5 M12.5 406.5 L15 406.5 M12.5 410.5 L15 410.5 M12.5 413.5 L15 413.5 M0 417.5 L15 417.5 M12.5 421.5 L15 421.5 M12.5 425.5 L15 425.5 M12.5 428.5 L15 428.5 M12.5 432.5 L15 432.5 M10.5 436.5 L15 436.5 M12.5 440.5 L15 440.5 M12.5 444.5 L15 444.5 M12.5 447.5 L15 447.5 M12.5 451.5 L15 451.5 M0 455.5 L15 455.5 M12.5 459.5 L15 459.5 M12.5 462.5 L15 462.5 M12.5 466.5 L15 466.5 M12.5 470.5 L15 470.5 M10.5 474.5 L15 474.5 M12.5 478.5 L15 478.5 M12.5 481.5 L15 481.5 M12.5 485.5 L15 485.5 M12.5 489.5 L15 489.5 M0 493.5 L15 493.5 M12.5 496.5 L15 496.5 M12.5 500.5 L15 500.5 M12.5 504.5 L15 504.5 M12.5 508.5 L15 508.5 M10.5 512.5 L15 512.5 M12.5 515.5 L15 515.5 M12.5 519.5 L15 519.5 M12.5 523.5 L15 523.5 M12.5 527.5 L15 527.5 M0 531.5 L15 531.5 M12.5 534.5 L15 534.5 M12.5 538.5 L15 538.5 M12.5 542.5 L15 542.5 M12.5 546.5 L15 546.5 M10.5 549.5 L15 549.5 M12.5 553.5 L15 553.5 M12.5 557.5 L15 557.5 M12.5 561.5 L15 561.5 M12.5 565.5 L15 565.5 M0 568.5 L15 568.5 M12.5 572.5 L15 572.5 M12.5 576.5 L15 576.5 M12.5 580.5 L15 580.5 M12.5 583.5 L15 583.5 M10.5 587.5 L15 587.5 M12.5 591.5 L15 591.5 M12.5 595.5 L15 595.5 M12.5 599.5 L15 599.5 M12.5 602.5 L15 602.5 M0 606.5 L15 606.5 M12.5 610.5 L15 610.5 M12.5 614.5 L15 614.5 M12.5 617.5 L15 617.5 M12.5 621.5 L15 621.5 M10.5 625.5 L15 625.5 M12.5 629.5 L15 629.5 M12.5 633.5 L15 633.5 M12.5 636.5 L15 636.5 M12.5 640.5 L15 640.5 M0 644.5 L15 644.5 M12.5 648.5 L15 648.5 M12.5 651.5 L15 651.5 M12.5 655.5 L15 655.5 M12.5 659.5 L15 659.5 M10.5 663.5 L15 663.5 M12.5 667.5 L15 667.5 M12.5 670.5 L15 670.5 M12.5 674.5 L15 674.5 M12.5 678.5 L15 678.5 M0 682.5 L15 682.5 M12.5 685.5 L15 685.5 M12.5 689.5 L15 689.5 M12.5 693.5 L15 693.5 M12.5 697.5 L15 697.5 M10.5 701.5 L15 701.5 M12.5 704.5 L15 704.5 M12.5 708.5 L15 708.5 M12.5 712.5 L15 712.5 M12.5 716.5 L15 716.5 M0 719.5 L15 719.5 M12.5 723.5 L15 723.5 M12.5 727.5 L15 727.5 M12.5 731.5 L15 731.5 M12.5 735.5 L15 735.5 M10.5 738.5 L15 738.5 M12.5 742.5 L15 742.5 M12.5 746.5 L15 746.5 M12.5 750.5 L15 750.5 M12.5 754.5 L15 754.5 M0 757.5 L15 757.5 M12.5 761.5 L15 761.5 M12.5 765.5 L15 765.5 M12.5 769.5 L15 769.5 M12.5 772.5 L15 772.5 M10.5 776.5 L15 776.5 M12.5 780.5 L15 780.5 M12.5 784.5 L15 784.5 M12.5 788.5 L15 788.5 M12.5 791.5 L15 791.5 M0 795.5 L15 795.5 M12.5 799.5 L15 799.5 M12.5 803.5 L15 803.5 M12.5 806.5 L15 806.5 M12.5 810.5 L15 810.5 M10.5 814.5 L15 814.5 M12.5 818.5 L15 818.5 M12.5 822.5 L15 822.5 M12.5 825.5 L15 825.5 M12.5 829.5 L15 829.5 M0 833.5 L15 833.5 M12.5 837.5 L15 837.5 M12.5 840.5 L15 840.5 M12.5 844.5 L15 844.5 M12.5 848.5 L15 848.5 M10.5 852.5 L15 852.5 M12.5 856.5 L15 856.5 M12.5 859.5 L15 859.5 M12.5 863.5 L15 863.5 M12.5 867.5 L15 867.5 M0 871.5 L15 871.5 M12.5 874.5 L15 874.5 M12.5 878.5 L15 878.5 M12.5 882.5 L15 882.5 M12.5 886.5 L15 886.5 M10.5 890.5 L15 890.5 M12.5 893.5 L15 893.5 M12.5 897.5 L15 897.5 M12.5 901.5 L15 901.5 M12.5 905.5 L15 905.5 M0 908.5 L15 908.5 M12.5 912.5 L15 912.5 M12.5 916.5 L15 916.5 M12.5 920.5 L15 920.5 M12.5 924.5 L15 924.5 M10.5 927.5 L15 927.5 M12.5 931.5 L15 931.5" stroke="#a8a8a8" stroke-width="1"/></svg><div class="a" style="left:0px;top:35px;width:40px;height:997px;background:#535353;border-left:1px solid #444"></div><div class="a" style="left:40px;top:35px;width:2px;height:997px;background:#3a3a3a"></div><div class="a" style="left:2px;top:36px;width:37px;height:12px;background:#434343"></div><svg class="a" style="left:6px;top:39px" width="9" height="7" viewBox="0 0 9 7"><path d="M1 1 L3.5 3.5 L1 6 M4.5 1 L7 3.5 L4.5 6" fill="none" stroke="#cfcfcf" stroke-width="1.5"/></svg><div class="a" style="left:10px;top:52px;width:20px;height:4px;background:repeating-linear-gradient(90deg,#777 0 1px,transparent 1px 3px)"></div><div class="a" style="left:1px;top:183px;width:38px;height:1px;background:#474747"></div><div class="a" style="left:1px;top:332px;width:38px;height:1px;background:#474747"></div><div class="a" style="left:1px;top:429px;width:38px;height:1px;background:#474747"></div><div class="a" style="left:1px;top:528px;width:38px;height:1px;background:#474747"></div><div class="a" style="left:1px;top:630px;width:38px;height:1px;background:#474747"></div><div class="a" style="left:1px;top:657px;width:38px;height:1px;background:#474747"></div><div class="a" style="left:6px;top:63px;width:28px;height:22px;background:#353535;border-radius:3px"></div><svg class="a" style="left:13px;top:65px" width="16" height="19" viewBox="0 0 16 19"><path d="M2 1.5 L14.5 12.5 L8.5 12.5 L2 18 Z" fill="#c8c8c8"/></svg><svg class="a" style="left:13px;top:89px" width="16" height="19" viewBox="0 0 16 19"><path d="M2.5 2.5 L13.5 12 L8 12.3 L2.5 16.5 Z" fill="none" stroke="#c8c8c8" stroke-width="1.3"/></svg><svg class="a" style="left:12px;top:114px" width="18" height="18" viewBox="0 0 18 18"><path d="M2 1 L8 1 L12 5 L12 8 M8 1 L8 5 L12 5 M2 1 L2 15 L8 15" fill="none" stroke="#c8c8c8" stroke-width="1.3"/><path d="M9.5 9 L17 13 L13 14 L11 17 Z" fill="#c8c8c8"/></svg><svg class="a" style="left:10px;top:138px" width="20" height="15" viewBox="0 0 20 15"><path d="M2 1 L2 14 M18 1 L18 14" stroke="#c8c8c8" stroke-width="2"/><path d="M5 7.5 L15 7.5" stroke="#c8c8c8" stroke-width="1.5"/><path d="M7.5 4.5 L4.5 7.5 L7.5 10.5 Z M12.5 4.5 L15.5 7.5 L12.5 10.5 Z" fill="#c8c8c8" stroke="#c8c8c8" stroke-width="1"/></svg><svg class="a" style="left:12px;top:162px" width="18" height="17" viewBox="0 0 18 17"><path d="M1.5 7 L1.5 15.5 L15.5 15.5 L15.5 7" fill="none" stroke="#c8c8c8" stroke-width="1.8"/><rect x="4.5" y="9.5" width="2" height="2" fill="#c8c8c8"/><rect x="7.5" y="9.5" width="2" height="2" fill="#c8c8c8"/><rect x="10.5" y="9.5" width="2" height="2" fill="#c8c8c8"/><rect x="4.5" y="12.5" width="2" height="1.5" fill="#c8c8c8"/><rect x="7.5" y="12.5" width="2" height="1.5" fill="#c8c8c8"/><rect x="10.5" y="12.5" width="2" height="1.5" fill="#c8c8c8"/><path d="M5 1 L9 5" stroke="#c8c8c8" stroke-width="1.3"/><path d="M10 2.5 L10 6 L6.5 6 Z" fill="#c8c8c8"/></svg><svg class="a" style="left:10px;top:186px" width="20" height="20" viewBox="0 0 20 20"><path d="M4 2 L16 2 L16 4 M4 2 L4 4 M10 2 L10 13 M7 13 L13 13" fill="none" stroke="#c8c8c8" stroke-width="1.6"/><path d="M3 17 L17 17 M5 15 L3 17 L5 19" fill="none" stroke="#c8c8c8" stroke-width="1.2"/></svg><svg class="a" style="left:11px;top:212px" width="18" height="18" viewBox="0 0 18 18"><path d="M2 16 L16 2" stroke="#c8c8c8" stroke-width="1.5"/></svg><svg class="a" style="left:11px;top:236px" width="18" height="18" viewBox="0 0 18 18"><path d="M2 16 L4 9 L11 2 L16 7 L9 14 Z" fill="#c8c8c8"/><circle cx="8" cy="10" r="1.3" fill="#535353"/></svg><svg class="a" style="left:11px;top:260px" width="18" height="18" viewBox="0 0 18 18"><path d="M2 16 L3 12 L13 2 L16 5 L6 15 Z" fill="#c8c8c8"/></svg><svg class="a" style="left:10px;top:284px" width="19" height="19" viewBox="0 0 19 19"><rect x="1.5" y="1.5" width="16" height="16" fill="none" stroke="#c8c8c8" stroke-width="1.2"/><path d="M1.5 1.5 L17.5 17.5 M17.5 1.5 L1.5 17.5" stroke="#c8c8c8" stroke-width="1.2"/></svg><svg class="a" style="left:10px;top:308px" width="19" height="19" viewBox="0 0 19 19"><rect x="1.5" y="1.5" width="16" height="16" fill="none" stroke="#c8c8c8" stroke-width="1.2"/></svg><svg class="a" style="left:30px;top:205px" width="4" height="4" viewBox="0 0 4 4"><path d="M4 0 L4 4 L0 4 Z" fill="#c8c8c8"/></svg><svg class="a" style="left:30px;top:253px" width="4" height="4" viewBox="0 0 4 4"><path d="M4 0 L4 4 L0 4 Z" fill="#c8c8c8"/></svg><svg class="a" style="left:30px;top:277px" width="4" height="4" viewBox="0 0 4 4"><path d="M4 0 L4 4 L0 4 Z" fill="#c8c8c8"/></svg><svg class="a" style="left:30px;top:300px" width="4" height="4" viewBox="0 0 4 4"><path d="M4 0 L4 4 L0 4 Z" fill="#c8c8c8"/></svg><svg class="a" style="left:30px;top:324px" width="4" height="4" viewBox="0 0 4 4"><path d="M4 0 L4 4 L0 4 Z" fill="#c8c8c8"/></svg><svg class="a" style="left:30px;top:375px" width="4" height="4" viewBox="0 0 4 4"><path d="M4 0 L4 4 L0 4 Z" fill="#c8c8c8"/></svg><svg class="a" style="left:30px;top:474px" width="4" height="4" viewBox="0 0 4 4"><path d="M4 0 L4 4 L0 4 Z" fill="#c8c8c8"/></svg><svg class="a" style="left:10px;top:334px" width="20" height="18" viewBox="0 0 20 18"><circle cx="16" cy="4" r="2.8" fill="none" stroke="#c8c8c8" stroke-width="1.3"/><circle cx="16" cy="14" r="2.8" fill="none" stroke="#c8c8c8" stroke-width="1.3"/><path d="M13.5 5.5 L2 12 M13.5 12.5 L2 6" stroke="#c8c8c8" stroke-width="1.4"/></svg><svg class="a" style="left:10px;top:357px" width="20" height="20" viewBox="0 0 20 20"><rect x="5" y="5" width="13" height="13" fill="none" stroke="#c8c8c8" stroke-dasharray="2 1.5"/><path d="M1 1 L11 6 L7 7 L6 11 Z" fill="#c8c8c8"/></svg><div class="a" style="left:12px;top:384px;width:16px;height:16px;background:linear-gradient(135deg,#fff,#333);border:1px solid #999"></div><div class="a" style="left:12px;top:408px;width:16px;height:16px;background:repeating-conic-gradient(#888 0 25%,#333 0 50%) 0 0/6px 6px;border:1px solid #777"></div><svg class="a" style="left:11px;top:434px" width="18" height="18" viewBox="0 0 18 18"><path d="M2 2 L16 2 L16 12 L12 16 L2 16 Z" fill="#c8c8c8"/><path d="M5 6 L13 6 M5 9 L13 9 M5 12 L10 12" stroke="#535353" stroke-width="1.2"/></svg><svg class="a" style="left:10px;top:458px" width="20" height="18" viewBox="0 0 20 18"><path d="M3 16 L11 8 M9 6 L14 11 M12 4 L14 2 L17 5 L15 7" fill="none" stroke="#c8c8c8" stroke-width="1.6"/><rect x="11" y="13" width="8" height="4" fill="none" stroke="#c8c8c8"/></svg><svg class="a" style="left:11px;top:482px" width="18" height="19" viewBox="0 0 18 19"><path d="M4 9 L4 4 Q4 3 5 3 Q6 3 6 4 L6 8 L6 2 Q6 1 7 1 Q8 1 8 2 L8 8 L8 2 Q8 1 9.5 1 Q11 1 11 2 L11 8 L11 3 Q11 2 12 2 Q13 2 13 3 L13 11 L15 8 Q16 7 17 8 L14 16 Q13 18 10 18 L7 18 Q4 18 3 15 L2 11 Q2 9 4 9 Z" fill="#c8c8c8"/></svg><svg class="a" style="left:11px;top:506px" width="18" height="18" viewBox="0 0 18 18"><circle cx="7" cy="7" r="5.5" fill="none" stroke="#c8c8c8" stroke-width="1.5"/><path d="M11 11 L17 17" stroke="#c8c8c8" stroke-width="2"/></svg><div class="a" style="left:7px;top:532px;width:8px;height:8px;background:#fff;border:1px solid #222"></div><div class="a" style="left:11px;top:536px;width:8px;height:8px;background:#222;border:1px solid #fff"></div><svg class="a" style="left:23px;top:531px" width="12" height="12" viewBox="0 0 12 12"><path d="M2 4 L8 4 Q10 4 10 6 L10 10 M8 8 L10 10 L12 8 M4 2 L2 4 L4 6" fill="none" stroke="#c8c8c8" stroke-width="1.3"/></svg><div class="a" style="left:5px;top:549px;width:21px;height:21px;background:#fff;border:1px solid #aaa"></div><svg class="a" style="left:5px;top:549px" width="21" height="21" viewBox="0 0 21 21"><path d="M1 20 L20 1" stroke="#e4141b" stroke-width="2"/></svg><div class="a" style="left:14px;top:557px;width:21px;height:21px;background:#fff;border:1px solid #aaa"></div><div class="a" style="left:18px;top:561px;width:13px;height:13px;background:#535353"></div><svg class="a" style="left:14px;top:557px" width="21" height="21" viewBox="0 0 21 21"><path d="M1 20 L20 1" stroke="#e4141b" stroke-width="2"/></svg><div class="a" style="left:7px;top:584px;width:13px;height:14px;background:#3a3a3a;border-radius:2px"></div><div class="a" style="left:10px;top:587px;width:8px;height:8px;border:1px solid #bbb"></div><div class="a ui" style="left:24px;top:585px;font-size:12px;line-height:1;color:#888;font-family:'Liberation Serif'">T</div><div class="a" style="left:6px;top:605px;width:28px;height:22px;background:#3a3a3a;border-radius:3px"></div><div class="a" style="left:11px;top:607px;width:18px;height:17px;background:#fff"></div><svg class="a" style="left:11px;top:607px" width="18" height="17" viewBox="0 0 18 17"><path d="M1 16 L17 1" stroke="#e4141b" stroke-width="2"/></svg><svg class="a" style="left:30px;top:622px" width="4" height="4" viewBox="0 0 4 4"><path d="M4 0 L4 4 L0 4 Z" fill="#c8c8c8"/></svg><svg class="a" style="left:12px;top:638px" width="18" height="15" viewBox="0 0 18 15"><rect x="3" y="4" width="11" height="7" fill="#c8c8c8"/><path d="M1 2 L1 5 M1 8 L1 11 M16 2 L16 5 M16 8 L16 11 M4 1 L7 1 M10 1 L13 1" stroke="#c8c8c8"/></svg><svg class="a" style="left:30px;top:652px" width="4" height="4" viewBox="0 0 4 4"><path d="M4 0 L4 4 L0 4 Z" fill="#c8c8c8"/></svg><div class="a" style="left:6px;top:661px;width:28px;height:22px;background:#3a3a3a;border-radius:3px"></div><svg class="a" style="left:13px;top:665px" width="14" height="14" viewBox="0 0 14 14"><rect x="1" y="1" width="12" height="12" fill="none" stroke="#c8c8c8" stroke-width="1.3"/><rect x="4" y="4" width="6" height="6" fill="none" stroke="#c8c8c8"/></svg><div class="a" style="left:42px;top:1015px;width:1623px;height:17px;background:#535353"></div><div class="a" style="left:0px;top:1031px;width:1920px;height:1px;background:#333"></div><div class="a ui" style="left:56px;top:1018px;font-size:11px;line-height:1;color:#e6e6e6;">100%</div><svg class="a" style="left:97px;top:1020px" width="10" height="6"><path d="M1 1 L5.0 5 L9 1" stroke="#ccc" stroke-width="1.3" fill="none"/></svg><svg class="a" style="left:117px;top:1017px" width="12" height="12" viewBox="0 0 12 12"><path d="M2 2 L2 10" stroke="#c8c8c8" stroke-width="1.5"/><path d="M10 2 L4 6 L10 10 Z" fill="#c8c8c8"/></svg><svg class="a" style="left:140px;top:1017px" width="8" height="12" viewBox="0 0 8 12"><path d="M7 2 L1 6 L7 10 Z" fill="#c8c8c8"/></svg><div class="a" style="left:158px;top:1015px;width:91px;height:16px;background:#434343;border:1px solid #6a6a6a;border-radius:2px"></div><div class="a" style="left:230px;top:1016px;width:1px;height:14px;background:#6a6a6a"></div><div class="a heb" style="left:160px;top:1017px;font-size:12px;line-height:12px;color:#eee;direction:ltr">לט</div><svg class="a" style="left:234px;top:1020px" width="10" height="6"><path d="M1 1 L5.0 5 L9 1" stroke="#ccc" stroke-width="1.3" fill="none"/></svg><svg class="a" style="left:260px;top:1017px" width="8" height="12" viewBox="0 0 8 12"><path d="M1 2 L7 6 L1 10 Z" fill="#c8c8c8"/></svg><svg class="a" style="left:278px;top:1017px" width="12" height="12" viewBox="0 0 12 12"><path d="M10 2 L10 10" stroke="#c8c8c8" stroke-width="1.5"/><path d="M2 2 L8 6 L2 10 Z" fill="#c8c8c8"/></svg><svg class="a" style="left:305px;top:1016px" width="18" height="14" viewBox="0 0 18 14"><path d="M3 11 A6 6 0 1 1 13 11" fill="none" stroke="#c8c8c8" stroke-width="2"/><path d="M8 7 L8 3" stroke="#c8c8c8" stroke-width="2"/><circle cx="16" cy="12" r="1" fill="#c8c8c8"/></svg><div class="a ui" style="left:338px;top:1018px;font-size:11px;line-height:1;color:#e6e6e6;">[Basic] (working)</div><svg class="a" style="left:439px;top:1020px" width="10" height="6"><path d="M1 1 L5.0 5 L9 1" stroke="#ccc" stroke-width="1.3" fill="none"/></svg><div class="a" style="left:464px;top:1018px;width:10px;height:10px;background:#20b020;border-radius:50%"></div><div class="a ui" style="left:480px;top:1018px;font-size:11px;line-height:1;color:#e6e6e6;">No errors</div><svg class="a" style="left:542px;top:1020px" width="10" height="6"><path d="M1 1 L5.0 5 L9 1" stroke="#ccc" stroke-width="1.3" fill="none"/></svg><div class="a" style="left:555px;top:1015px;width:1075px;height:17px;background:#434343"></div><svg class="a" style="left:560px;top:1017px" width="6" height="12" viewBox="0 0 6 12"><path d="M5 2 L1 6 L5 10" fill="none" stroke="#888" stroke-width="1"/></svg><div class="a" style="left:728px;top:1017px;width:620px;height:13px;background:#6a6a6a;border-radius:7px"></div><svg class="a" style="left:1615px;top:1017px" width="6" height="12" viewBox="0 0 6 12"><path d="M1 2 L5 6 L1 10" fill="none" stroke="#888" stroke-width="1"/></svg><div class="a" style="left:1630px;top:1015px;width:19px;height:17px;background:#535353"></div><svg class="a" style="left:1630px;top:1017px" width="18" height="12" viewBox="0 0 18 12"><rect x="1.5" y="1.5" width="14" height="10" fill="none" stroke="#c8c8c8" stroke-width="1.2"/><path d="M8.5 1.5 L8.5 11.5" stroke="#c8c8c8" stroke-width="1.2"/></svg><div class="a" style="left:1649px;top:65px;width:16px;height:950px;background:#434343"></div><svg class="a" style="left:1651px;top:70px" width="12" height="8" viewBox="0 0 12 8"><path d="M1 7 L6 2 L11 7" fill="none" stroke="#888" stroke-width="1"/></svg><div class="a" style="left:1651px;top:527px;width:12px;height:23px;background:#6a6a6a;border-radius:6px"></div><svg class="a" style="left:1651px;top:1003px" width="12" height="8" viewBox="0 0 12 8"><path d="M1 1 L6 6 L11 1" fill="none" stroke="#888" stroke-width="1"/></svg><div class="a" style="left:0px;top:1032px;width:1920px;height:48px;background:#f3f3f3;border-top:1px solid #e0e0e0"></div><div class="a ui" style="left:19px;top:1042px;font-size:12px;line-height:1;color:#1a1a1a;">16:57</div><div class="a ui" style="left:19px;top:1058px;font-size:12px;line-height:1;color:#1a1a1a;">09/03/2022</div><svg class="a" style="left:96px;top:1047px" width="18" height="16" viewBox="0 0 18 16"><path d="M1 5 L4 5 L8 1 L8 15 L4 11 L1 11 Z" fill="none" stroke="#222" stroke-width="1.2"/><path d="M11 5 Q13 8 11 11 M13 3 Q16 8 13 13" fill="none" stroke="#222" stroke-width="1.2"/></svg><svg class="a" style="left:120px;top:1046px" width="19" height="18" viewBox="0 0 19 18"><rect x="1" y="4" width="12" height="9" fill="none" stroke="#222" stroke-width="1.2"/><path d="M7 13 L7 16 M3 16 L11 16" stroke="#222" stroke-width="1.2"/><rect x="13" y="1" width="4" height="12" fill="#f3f3f3" stroke="#222" stroke-width="1.2"/></svg><div class="a" style="left:155px;top:1050px;font-family:'Liberation Sans';font-size:13px;line-height:14px;color:#222;direction:rtl">עבר</div><svg class="a" style="left:194px;top:1049px" width="14" height="9" viewBox="0 0 14 9"><path d="M1 8 L7 2 L13 8" fill="none" stroke="#222" stroke-width="1.5"/></svg><div class="a" style="left:786px;top:1037px;width:38px;height:38px;background:#fbfbfb;border:1px solid #e5e5e5;border-radius:4px"></div><div class="a" style="left:794px;top:1045px;width:23px;height:22px;background:#49021f;border-radius:4px;color:#ff3a8c;font-weight:bold;font-size:12px;line-height:22px;text-align:center">Id</div><div class="a" style="left:799px;top:1072px;width:14px;height:3px;background:#1a73d9;border-radius:2px"></div><div class="a" style="left:842px;top:1045px;width:20px;height:22px;background:linear-gradient(180deg,#33c481 0 33%,#21a366 33% 66%,#107c41 66%);border-radius:2px"></div><div class="a" style="left:836px;top:1050px;width:14px;height:13px;background:#107c41;color:#fff;font-weight:bold;font-size:10px;line-height:13px;text-align:center;border-radius:2px">X</div><div class="a" style="left:886px;top:1045px;width:20px;height:22px;background:linear-gradient(180deg,#41a5ee 0 33%,#2b7cd3 33% 66%,#185abd 66%);border-radius:2px"></div><div class="a" style="left:880px;top:1050px;width:14px;height:13px;background:#185abd;color:#fff;font-weight:bold;font-size:10px;line-height:13px;text-align:center;border-radius:2px">W</div><div class="a" style="left:925px;top:1045px;width:23px;height:23px;background:conic-gradient(from -60deg,#db4437 0 120deg,#f4c20d 120deg 240deg,#0f9d58 240deg 360deg);border-radius:50%"></div><div class="a" style="left:931px;top:1051px;width:11px;height:11px;background:#4285f4;border:2px solid #fff;border-radius:50%"></div><div class="a" style="left:934px;top:1072px;width:6px;height:2px;background:#777;border-radius:1px"></div><div class="a" style="left:969px;top:1046px;width:24px;height:20px;background:#f8c93c;border-radius:2px"></div><div class="a" style="left:969px;top:1046px;width:10px;height:4px;background:#e0a91c"></div><div class="a" style="left:975px;top:1059px;width:14px;height:4px;background:#1d7ad6;border-radius:1px"></div><div class="a" style="left:978px;top:1072px;width:6px;height:2px;background:#777;border-radius:1px"></div><div class="a" style="left:1013px;top:1045px;width:16px;height:14px;background:#fff;border:1px solid #ccc"></div><div class="a" style="left:1019px;top:1051px;width:19px;height:15px;background:#1a1a1a"></div><svg class="a" style="left:1058px;top:1045px" width="23" height="23" viewBox="0 0 23 23"><circle cx="9" cy="9" r="7" fill="none" stroke="#111" stroke-width="2"/><path d="M14 14 L21 21" stroke="#111" stroke-width="2.5"/></svg><svg class="a" style="left:1102px;top:1045px" width="24" height="23" viewBox="0 0 24 23"><rect x="0" y="0" width="11" height="11" fill="#1e90e8"/><rect x="12.5" y="0" width="11" height="11" fill="#2ea8f2"/><rect x="0" y="12.5" width="11" height="11" fill="#1877d4"/><rect x="12.5" y="12.5" width="11" height="11" fill="#1e90e8"/></svg><div class="a" style="left:1875px;top:1038px;width:36px;height:36px;background:radial-gradient(circle,#1e6d86 40%,#0f3b4d 100%);border-radius:50%;border:1px solid #0b2a36"></div><svg class="a" style="left:1881px;top:1045px" width="24" height="20" viewBox="0 0 24 20"><path d="M2 16 Q2 3 12 3 Q22 3 22 16 Z" fill="#f2c230"/><path d="M12 3 L12 16 M7 5 L9 16 M17 5 L15 16 M3.5 9 L6 16 M20.5 9 L18 16" stroke="#1e6d86" stroke-width="1"/><rect x="8" y="16" width="8" height="3" fill="#f2c230"/></svg><div class="a" style="left:1665px;top:35px;width:255px;height:997px;background:#535353"></div><div class="a" style="left:1665px;top:35px;width:2px;height:997px;background:#3d3d3d"></div><div class="a" style="left:1667px;top:36px;width:253px;height:12px;background:#434343"></div><svg class="a" style="left:1904px;top:39px" width="9" height="7" viewBox="0 0 9 7"><path d="M1 1 L3.5 3.5 L1 6 M4.5 1 L7 3.5 L4.5 6" fill="none" stroke="#cfcfcf" stroke-width="1.5"/></svg><div class="a" style="left:1667px;top:48px;width:253px;height:27px;background:#434343"></div><div class="a" style="left:1667px;top:48px;width:75px;height:27px;background:#474747"></div><div class="a" style="left:1742px;top:48px;width:60px;height:27px;background:#535353"></div><div class="a" style="left:1802px;top:48px;width:78px;height:27px;background:#474747"></div><div class="a ui" style="left:1679px;top:56px;font-size:12px;line-height:1;color:#a8a8a8;">Properties</div><svg class="a" style="left:1748px;top:56px" width="8" height="12" viewBox="0 0 8 12"><path d="M1 4.5 L4 1.5 L7 4.5 M1 7.5 L4 10.5 L7 7.5" fill="none" stroke="#cfcfcf" stroke-width="1.1"/></svg><div class="a ui" style="left:1759px;top:56px;font-size:12px;line-height:1;color:#f2f2f2;font-weight:bold">Pages</div><div class="a ui" style="left:1814px;top:56px;font-size:12px;line-height:1;color:#a8a8a8;">CC Libraries</div><div class="a" style="left:1901px;top:57px;width:12px;height:9px;background:repeating-linear-gradient(180deg,#ccc 0 1px,transparent 1px 2px)"></div><div class="a ui" style="left:1670px;top:84px;font-size:11px;line-height:1;color:#f0f0f0;">[None]</div><div class="a" style="left:1881px;top:79px;width:16px;height:23px;background:#fff"></div><div class="a ui" style="left:1670px;top:113px;font-size:11px;line-height:1;color:#f0f0f0;">A-Parent</div><div class="a" style="left:1864px;top:108px;width:16px;height:23px;background:#fff;border-right:1px solid #777"></div><div class="a" style="left:1881px;top:108px;width:16px;height:23px;background:#fff"></div><div class="a" style="left:1877px;top:110px;width:1px;height:20px;background:repeating-linear-gradient(180deg,#4f8fff 0 1px,transparent 1px 3px)"></div><div class="a" style="left:1895px;top:110px;width:1px;height:20px;background:repeating-linear-gradient(180deg,#4f8fff 0 1px,transparent 1px 3px)"></div><div class="a" style="left:1667px;top:137px;width:253px;height:2px;background:#5e5e5e"></div><div class="a" style="left:1905px;top:141px;width:13px;height:860px;background:#4b4b4b"></div><div class="a" style="left:1907px;top:293px;width:10px;height:290px;background:#6c6c6c;border-radius:5px"></div><svg class="a" style="left:1907px;top:145px" width="10" height="6"><path d="M1 5 L5 1 L9 5" stroke="#888" fill="none"/></svg><div class="a" style="left:0;top:140px;width:1920px;height:866px;overflow:hidden"><div class="a" style="left:0;top:-140px;width:1920px;height:1080px"><div class="a" style="left:1761px;top:119px;width:50px;height:35px;background:#fff;border:1px solid #d8d8d8"></div><div class="a" style="left:1763px;top:127px;width:10px;height:2px;background:#888"></div><div class="a" style="left:1763px;top:130px;width:10px;height:3px;background:#222"></div><div class="a" style="left:1763px;top:134px;width:10px;height:1px;background:#666"></div><div class="a" style="left:1763px;top:136px;width:10px;height:1px;background:#444"></div><div class="a" style="left:1763px;top:138px;width:10px;height:1px;background:#999"></div><div class="a" style="left:1763px;top:140px;width:10px;height:2px;background:#666"></div><div class="a" style="left:1763px;top:143px;width:10px;height:1px;background:#111"></div><div class="a" style="left:1763px;top:145px;width:10px;height:3px;background:#666"></div><div class="a" style="left:1763px;top:149px;width:10px;height:2px;background:#666"></div><div class="a" style="left:1774px;top:127px;width:11px;height:3px;background:#666"></div><div class="a" style="left:1774px;top:131px;width:11px;height:1px;background:#888"></div><div class="a" style="left:1774px;top:133px;width:11px;height:1px;background:#999"></div><div class="a" style="left:1774px;top:135px;width:11px;height:3px;background:#666"></div><div class="a" style="left:1774px;top:139px;width:11px;height:2px;background:#666"></div><div class="a" style="left:1774px;top:142px;width:11px;height:2px;background:#444"></div><div class="a" style="left:1774px;top:145px;width:11px;height:3px;background:#888"></div><div class="a" style="left:1774px;top:149px;width:11px;height:1px;background:#999"></div><div class="a" style="left:1774px;top:151px;width:11px;height:2px;background:#999"></div><div class="a ui" style="left:1762px;top:120px;font-size:10px;line-height:1;color:#000;font-weight:normal">A</div><div class="a ui" style="left:1798px;top:120px;font-size:10px;line-height:1;color:#000;">A</div><div class="a" style="left:1786px;top:113px;width:1px;height:47px;background:#bdbdbd"></div><div class="a heb" style="left:1736px;top:163px;width:100px;text-align:center;font-family:Liberation Sans;font-size:11px;line-height:12px;color:#e0e0e0">יב-יג</div><div class="a" style="left:1761px;top:183px;width:50px;height:35px;background:#fff;border:1px solid #d8d8d8"></div><div class="a" style="left:1763px;top:191px;width:10px;height:3px;background:#111"></div><div class="a" style="left:1763px;top:195px;width:10px;height:1px;background:#444"></div><div class="a" style="left:1763px;top:197px;width:10px;height:3px;background:#111"></div><div class="a" style="left:1763px;top:201px;width:10px;height:2px;background:#111"></div><div class="a" style="left:1763px;top:204px;width:10px;height:2px;background:#999"></div><div class="a" style="left:1763px;top:207px;width:10px;height:2px;background:#999"></div><div class="a" style="left:1763px;top:210px;width:10px;height:2px;background:#444"></div><div class="a" style="left:1763px;top:213px;width:10px;height:2px;background:#666"></div><div class="a" style="left:1774px;top:191px;width:11px;height:2px;background:#999"></div><div class="a" style="left:1774px;top:194px;width:11px;height:2px;background:#444"></div><div class="a" style="left:1774px;top:197px;width:11px;height:1px;background:#222"></div><div class="a" style="left:1774px;top:199px;width:11px;height:1px;background:#222"></div><div class="a" style="left:1774px;top:201px;width:11px;height:2px;background:#111"></div><div class="a" style="left:1774px;top:204px;width:11px;height:1px;background:#444"></div><div class="a" style="left:1774px;top:206px;width:11px;height:3px;background:#444"></div><div class="a" style="left:1774px;top:210px;width:11px;height:2px;background:#999"></div><div class="a" style="left:1774px;top:213px;width:11px;height:3px;background:#111"></div><div class="a" style="left:1787px;top:191px;width:10px;height:2px;background:#666"></div><div class="a" style="left:1787px;top:194px;width:10px;height:1px;background:#666"></div><div class="a" style="left:1787px;top:196px;width:10px;height:3px;background:#222"></div><div class="a" style="left:1787px;top:200px;width:10px;height:1px;background:#999"></div><div class="a" style="left:1787px;top:202px;width:10px;height:3px;background:#444"></div><div class="a" style="left:1787px;top:206px;width:10px;height:2px;background:#222"></div><div class="a" style="left:1787px;top:209px;width:10px;height:2px;background:#222"></div><div class="a" style="left:1787px;top:212px;width:10px;height:1px;background:#888"></div><div class="a" style="left:1787px;top:214px;width:10px;height:2px;background:#888"></div><div class="a" style="left:1798px;top:191px;width:11px;height:2px;background:#999"></div><div class="a" style="left:1798px;top:194px;width:11px;height:3px;background:#666"></div><div class="a" style="left:1798px;top:198px;width:11px;height:1px;background:#444"></div><div class="a" style="left:1798px;top:200px;width:11px;height:3px;background:#666"></div><div class="a" style="left:1798px;top:204px;width:11px;height:2px;background:#999"></div><div class="a" style="left:1798px;top:207px;width:11px;height:2px;background:#222"></div><div class="a" style="left:1798px;top:210px;width:11px;height:1px;background:#999"></div><div class="a" style="left:1798px;top:212px;width:11px;height:2px;background:#999"></div><div class="a" style="left:1798px;top:215px;width:11px;height:2px;background:#999"></div><div class="a ui" style="left:1762px;top:184px;font-size:10px;line-height:1;color:#000;font-weight:normal">A</div><div class="a ui" style="left:1798px;top:184px;font-size:10px;line-height:1;color:#000;">A</div><div class="a" style="left:1786px;top:177px;width:1px;height:47px;background:#bdbdbd"></div><div class="a heb" style="left:1736px;top:227px;width:100px;text-align:center;font-family:Liberation Sans;font-size:11px;line-height:12px;color:#e0e0e0">יד-טו</div><div class="a" style="left:1761px;top:247px;width:50px;height:35px;background:#fff;border:1px solid #d8d8d8"></div><div class="a" style="left:1763px;top:255px;width:10px;height:2px;background:#999"></div><div class="a" style="left:1763px;top:258px;width:10px;height:1px;background:#444"></div><div class="a" style="left:1763px;top:260px;width:10px;height:1px;background:#111"></div><div class="a" style="left:1763px;top:262px;width:10px;height:3px;background:#111"></div><div class="a" style="left:1763px;top:266px;width:10px;height:3px;background:#888"></div><div class="a" style="left:1763px;top:270px;width:10px;height:1px;background:#111"></div><div class="a" style="left:1763px;top:272px;width:10px;height:1px;background:#111"></div><div class="a" style="left:1763px;top:274px;width:10px;height:3px;background:#999"></div><div class="a" style="left:1763px;top:278px;width:10px;height:1px;background:#222"></div><div class="a" style="left:1774px;top:255px;width:11px;height:3px;background:#444"></div><div class="a" style="left:1774px;top:259px;width:11px;height:2px;background:#999"></div><div class="a" style="left:1774px;top:262px;width:11px;height:1px;background:#444"></div><div class="a" style="left:1774px;top:264px;width:11px;height:1px;background:#666"></div><div class="a" style="left:1774px;top:266px;width:11px;height:1px;background:#222"></div><div class="a" style="left:1774px;top:268px;width:11px;height:1px;background:#111"></div><div class="a" style="left:1774px;top:270px;width:11px;height:2px;background:#111"></div><div class="a" style="left:1774px;top:273px;width:11px;height:1px;background:#999"></div><div class="a" style="left:1774px;top:275px;width:11px;height:2px;background:#111"></div><div class="a" style="left:1774px;top:278px;width:11px;height:3px;background:#999"></div><div class="a ui" style="left:1762px;top:248px;font-size:10px;line-height:1;color:#000;font-weight:normal">A</div><div class="a ui" style="left:1798px;top:248px;font-size:10px;line-height:1;color:#000;">A</div><div class="a" style="left:1786px;top:241px;width:1px;height:47px;background:#bdbdbd"></div><div class="a heb" style="left:1736px;top:291px;width:100px;text-align:center;font-family:Liberation Sans;font-size:11px;line-height:12px;color:#e0e0e0">טז-יז</div><div class="a" style="left:1761px;top:311px;width:50px;height:35px;background:#fff;border:1px solid #d8d8d8"></div><div class="a" style="left:1763px;top:319px;width:10px;height:1px;background:#666"></div><div class="a" style="left:1763px;top:321px;width:10px;height:1px;background:#444"></div><div class="a" style="left:1763px;top:323px;width:10px;height:2px;background:#222"></div><div class="a" style="left:1763px;top:326px;width:10px;height:2px;background:#444"></div><div class="a" style="left:1763px;top:329px;width:10px;height:2px;background:#999"></div><div class="a" style="left:1763px;top:332px;width:10px;height:1px;background:#999"></div><div class="a" style="left:1763px;top:334px;width:10px;height:2px;background:#111"></div><div class="a" style="left:1763px;top:337px;width:10px;height:3px;background:#222"></div><div class="a" style="left:1763px;top:341px;width:10px;height:2px;background:#999"></div><div class="a" style="left:1774px;top:319px;width:11px;height:3px;background:#999"></div><div class="a" style="left:1774px;top:323px;width:11px;height:2px;background:#666"></div><div class="a" style="left:1774px;top:326px;width:11px;height:1px;background:#444"></div><div class="a" style="left:1774px;top:328px;width:11px;height:3px;background:#444"></div><div class="a" style="left:1774px;top:332px;width:11px;height:3px;background:#111"></div><div class="a" style="left:1774px;top:336px;width:11px;height:2px;background:#999"></div><div class="a" style="left:1774px;top:339px;width:11px;height:2px;background:#888"></div><div class="a" style="left:1774px;top:342px;width:11px;height:2px;background:#666"></div><div class="a" style="left:1787px;top:319px;width:10px;height:2px;background:#444"></div><div class="a" style="left:1787px;top:322px;width:10px;height:2px;background:#888"></div><div class="a" style="left:1787px;top:325px;width:10px;height:2px;background:#999"></div><div class="a" style="left:1787px;top:328px;width:10px;height:2px;background:#111"></div><div class="a" style="left:1787px;top:331px;width:10px;height:3px;background:#222"></div><div class="a" style="left:1787px;top:335px;width:10px;height:2px;background:#999"></div><div class="a" style="left:1787px;top:338px;width:10px;height:2px;background:#444"></div><div class="a" style="left:1787px;top:341px;width:10px;height:3px;background:#888"></div><div class="a" style="left:1798px;top:319px;width:11px;height:3px;background:#222"></div><div class="a" style="left:1798px;top:323px;width:11px;height:3px;background:#222"></div><div class="a" style="left:1798px;top:327px;width:11px;height:2px;background:#111"></div><div class="a" style="left:1798px;top:330px;width:11px;height:2px;background:#111"></div><div class="a" style="left:1798px;top:333px;width:11px;height:2px;background:#222"></div><div class="a" style="left:1798px;top:336px;width:11px;height:3px;background:#111"></div><div class="a" style="left:1798px;top:340px;width:11px;height:2px;background:#999"></div><div class="a" style="left:1798px;top:343px;width:11px;height:3px;background:#111"></div><div class="a ui" style="left:1762px;top:312px;font-size:10px;line-height:1;color:#000;font-weight:normal">A</div><div class="a ui" style="left:1798px;top:312px;font-size:10px;line-height:1;color:#000;">A</div><div class="a" style="left:1786px;top:305px;width:1px;height:47px;background:#bdbdbd"></div><div class="a heb" style="left:1736px;top:355px;width:100px;text-align:center;font-family:Liberation Sans;font-size:11px;line-height:12px;color:#e0e0e0">יח-יט</div><div class="a" style="left:1761px;top:375px;width:50px;height:35px;background:#fff;border:1px solid #d8d8d8"></div><div class="a" style="left:1763px;top:383px;width:10px;height:2px;background:#999"></div><div class="a" style="left:1763px;top:386px;width:10px;height:2px;background:#444"></div><div class="a" style="left:1763px;top:389px;width:10px;height:3px;background:#222"></div><div class="a" style="left:1763px;top:393px;width:10px;height:1px;background:#999"></div><div class="a" style="left:1763px;top:395px;width:10px;height:1px;background:#111"></div><div class="a" style="left:1763px;top:397px;width:10px;height:2px;background:#999"></div><div class="a" style="left:1763px;top:400px;width:10px;height:2px;background:#888"></div><div class="a" style="left:1763px;top:403px;width:10px;height:3px;background:#999"></div><div class="a" style="left:1763px;top:407px;width:10px;height:3px;background:#111"></div><div class="a" style="left:1774px;top:383px;width:11px;height:2px;background:#888"></div><div class="a" style="left:1774px;top:386px;width:11px;height:2px;background:#999"></div><div class="a" style="left:1774px;top:389px;width:11px;height:3px;background:#222"></div><div class="a" style="left:1774px;top:393px;width:11px;height:1px;background:#222"></div><div class="a" style="left:1774px;top:395px;width:11px;height:1px;background:#888"></div><div class="a" style="left:1774px;top:397px;width:11px;height:1px;background:#444"></div><div class="a" style="left:1774px;top:399px;width:11px;height:1px;background:#444"></div><div class="a" style="left:1774px;top:401px;width:11px;height:3px;background:#999"></div><div class="a" style="left:1774px;top:405px;width:11px;height:3px;background:#222"></div><div class="a" style="left:1787px;top:383px;width:10px;height:3px;background:#111"></div><div class="a" style="left:1787px;top:387px;width:10px;height:3px;background:#888"></div><div class="a" style="left:1787px;top:391px;width:10px;height:2px;background:#666"></div><div class="a" style="left:1787px;top:394px;width:10px;height:1px;background:#888"></div><div class="a" style="left:1787px;top:396px;width:10px;height:3px;background:#888"></div><div class="a" style="left:1787px;top:400px;width:10px;height:2px;background:#222"></div><div class="a" style="left:1787px;top:403px;width:10px;height:3px;background:#222"></div><div class="a" style="left:1787px;top:407px;width:10px;height:2px;background:#111"></div><div class="a" style="left:1798px;top:383px;width:11px;height:3px;background:#999"></div><div class="a" style="left:1798px;top:387px;width:11px;height:2px;background:#999"></div><div class="a" style="left:1798px;top:390px;width:11px;height:3px;background:#999"></div><div class="a" style="left:1798px;top:394px;width:11px;height:2px;background:#444"></div><div class="a" style="left:1798px;top:397px;width:11px;height:1px;background:#444"></div><div class="a" style="left:1798px;top:399px;width:11px;height:2px;background:#222"></div><div class="a" style="left:1798px;top:402px;width:11px;height:2px;background:#999"></div><div class="a" style="left:1798px;top:405px;width:11px;height:1px;background:#222"></div><div class="a" style="left:1798px;top:407px;width:11px;height:2px;background:#222"></div><div class="a ui" style="left:1762px;top:376px;font-size:10px;line-height:1;color:#000;font-weight:normal">A</div><div class="a ui" style="left:1798px;top:376px;font-size:10px;line-height:1;color:#000;">A</div><div class="a" style="left:1786px;top:369px;width:1px;height:47px;background:#bdbdbd"></div><div class="a heb" style="left:1736px;top:419px;width:100px;text-align:center;font-family:Liberation Sans;font-size:11px;line-height:12px;color:#e0e0e0">כ-כא</div><div class="a" style="left:1761px;top:439px;width:50px;height:35px;background:#fff;border:1px solid #d8d8d8"></div><div class="a" style="left:1763px;top:447px;width:10px;height:2px;background:#444"></div><div class="a" style="left:1763px;top:450px;width:10px;height:1px;background:#222"></div><div class="a" style="left:1763px;top:452px;width:10px;height:3px;background:#111"></div><div class="a" style="left:1763px;top:456px;width:10px;height:2px;background:#666"></div><div class="a" style="left:1763px;top:459px;width:10px;height:1px;background:#666"></div><div class="a" style="left:1763px;top:461px;width:10px;height:3px;background:#999"></div><div class="a" style="left:1763px;top:465px;width:10px;height:2px;background:#666"></div><div class="a" style="left:1763px;top:468px;width:10px;height:2px;background:#999"></div><div class="a" style="left:1763px;top:471px;width:10px;height:2px;background:#444"></div><div class="a" style="left:1774px;top:447px;width:11px;height:2px;background:#666"></div><div class="a" style="left:1774px;top:450px;width:11px;height:2px;background:#888"></div><div class="a" style="left:1774px;top:453px;width:11px;height:1px;background:#222"></div><div class="a" style="left:1774px;top:455px;width:11px;height:2px;background:#444"></div><div class="a" style="left:1774px;top:458px;width:11px;height:2px;background:#888"></div><div class="a" style="left:1774px;top:461px;width:11px;height:2px;background:#444"></div><div class="a" style="left:1774px;top:464px;width:11px;height:2px;background:#666"></div><div class="a" style="left:1774px;top:467px;width:11px;height:2px;background:#222"></div><div class="a" style="left:1774px;top:470px;width:11px;height:3px;background:#999"></div><div class="a ui" style="left:1762px;top:440px;font-size:10px;line-height:1;color:#000;font-weight:normal">A</div><div class="a ui" style="left:1798px;top:440px;font-size:10px;line-height:1;color:#000;">A</div><div class="a" style="left:1786px;top:433px;width:1px;height:47px;background:#bdbdbd"></div><div class="a heb" style="left:1736px;top:483px;width:100px;text-align:center;font-family:Liberation Sans;font-size:11px;line-height:12px;color:#e0e0e0">כב-כג</div><div class="a" style="left:1761px;top:503px;width:50px;height:35px;background:#fff;border:1px solid #d8d8d8"></div><div class="a" style="left:1763px;top:511px;width:10px;height:2px;background:#222"></div><div class="a" style="left:1763px;top:514px;width:10px;height:2px;background:#222"></div><div class="a" style="left:1763px;top:517px;width:10px;height:1px;background:#111"></div><div class="a" style="left:1763px;top:519px;width:10px;height:2px;background:#222"></div><div class="a" style="left:1763px;top:522px;width:10px;height:1px;background:#888"></div><div class="a" style="left:1763px;top:524px;width:10px;height:1px;background:#444"></div><div class="a" style="left:1763px;top:526px;width:10px;height:3px;background:#888"></div><div class="a" style="left:1763px;top:530px;width:10px;height:3px;background:#999"></div><div class="a" style="left:1763px;top:534px;width:10px;height:1px;background:#999"></div><div class="a" style="left:1774px;top:511px;width:11px;height:2px;background:#666"></div><div class="a" style="left:1774px;top:514px;width:11px;height:2px;background:#111"></div><div class="a" style="left:1774px;top:517px;width:11px;height:2px;background:#888"></div><div class="a" style="left:1774px;top:520px;width:11px;height:3px;background:#888"></div><div class="a" style="left:1774px;top:524px;width:11px;height:1px;background:#888"></div><div class="a" style="left:1774px;top:526px;width:11px;height:3px;background:#888"></div><div class="a" style="left:1774px;top:530px;width:11px;height:2px;background:#666"></div><div class="a" style="left:1774px;top:533px;width:11px;height:1px;background:#888"></div><div class="a" style="left:1774px;top:535px;width:11px;height:2px;background:#888"></div><div class="a" style="left:1787px;top:511px;width:10px;height:2px;background:#444"></div><div class="a" style="left:1787px;top:514px;width:10px;height:2px;background:#888"></div><div class="a" style="left:1787px;top:517px;width:10px;height:2px;background:#888"></div><div class="a" style="left:1787px;top:520px;width:10px;height:2px;background:#111"></div><div class="a" style="left:1787px;top:523px;width:10px;height:2px;background:#666"></div><div class="a" style="left:1787px;top:526px;width:10px;height:2px;background:#111"></div><div class="a" style="left:1787px;top:529px;width:10px;height:2px;background:#888"></div><div class="a" style="left:1787px;top:532px;width:10px;height:2px;background:#666"></div><div class="a" style="left:1787px;top:535px;width:10px;height:2px;background:#444"></div><div class="a" style="left:1798px;top:511px;width:11px;height:1px;background:#999"></div><div class="a" style="left:1798px;top:513px;width:11px;height:2px;background:#666"></div><div class="a" style="left:1798px;top:516px;width:11px;height:2px;background:#444"></div><div class="a" style="left:1798px;top:519px;width:11px;height:2px;background:#111"></div><div class="a" style="left:1798px;top:522px;width:11px;height:2px;background:#888"></div><div class="a" style="left:1798px;top:525px;width:11px;height:3px;background:#111"></div><div class="a" style="left:1798px;top:529px;width:11px;height:2px;background:#666"></div><div class="a" style="left:1798px;top:532px;width:11px;height:2px;background:#666"></div><div class="a" style="left:1798px;top:535px;width:11px;height:2px;background:#111"></div><div class="a ui" style="left:1762px;top:504px;font-size:10px;line-height:1;color:#000;font-weight:normal">A</div><div class="a ui" style="left:1798px;top:504px;font-size:10px;line-height:1;color:#000;">A</div><div class="a" style="left:1786px;top:497px;width:1px;height:47px;background:#bdbdbd"></div><div class="a heb" style="left:1736px;top:547px;width:100px;text-align:center;font-family:Liberation Sans;font-size:11px;line-height:12px;color:#e0e0e0">כד-כה</div><div class="a" style="left:1761px;top:567px;width:50px;height:35px;background:#fff;border:1px solid #d8d8d8"></div><div class="a" style="left:1763px;top:575px;width:10px;height:1px;background:#111"></div><div class="a" style="left:1763px;top:577px;width:10px;height:2px;background:#666"></div><div class="a" style="left:1763px;top:580px;width:10px;height:1px;background:#888"></div><div class="a" style="left:1763px;top:582px;width:10px;height:3px;background:#222"></div><div class="a" style="left:1763px;top:586px;width:10px;height:2px;background:#444"></div><div class="a" style="left:1763px;top:589px;width:10px;height:1px;background:#444"></div><div class="a" style="left:1763px;top:591px;width:10px;height:3px;background:#888"></div><div class="a" style="left:1763px;top:595px;width:10px;height:3px;background:#999"></div><div class="a" style="left:1763px;top:599px;width:10px;height:1px;background:#888"></div><div class="a" style="left:1774px;top:575px;width:11px;height:2px;background:#222"></div><div class="a" style="left:1774px;top:578px;width:11px;height:1px;background:#111"></div><div class="a" style="left:1774px;top:580px;width:11px;height:2px;background:#666"></div><div class="a" style="left:1774px;top:583px;width:11px;height:2px;background:#111"></div><div class="a" style="left:1774px;top:586px;width:11px;height:2px;background:#111"></div><div class="a" style="left:1774px;top:589px;width:11px;height:1px;background:#888"></div><div class="a" style="left:1774px;top:591px;width:11px;height:2px;background:#666"></div><div class="a" style="left:1774px;top:594px;width:11px;height:1px;background:#999"></div><div class="a" style="left:1774px;top:596px;width:11px;height:2px;background:#222"></div><div class="a" style="left:1774px;top:599px;width:11px;height:2px;background:#111"></div><div class="a" style="left:1787px;top:575px;width:10px;height:2px;background:#999"></div><div class="a" style="left:1787px;top:578px;width:10px;height:1px;background:#222"></div><div class="a" style="left:1787px;top:580px;width:10px;height:2px;background:#888"></div><div class="a" style="left:1787px;top:583px;width:10px;height:3px;background:#444"></div><div class="a" style="left:1787px;top:587px;width:10px;height:2px;background:#999"></div><div class="a" style="left:1787px;top:590px;width:10px;height:1px;background:#666"></div><div class="a" style="left:1787px;top:592px;width:10px;height:2px;background:#666"></div><div class="a" style="left:1787px;top:595px;width:10px;height:2px;background:#444"></div><div class="a" style="left:1787px;top:598px;width:10px;height:2px;background:#111"></div><div class="a" style="left:1798px;top:575px;width:11px;height:3px;background:#888"></div><div class="a" style="left:1798px;top:579px;width:11px;height:2px;background:#999"></div><div class="a" style="left:1798px;top:582px;width:11px;height:2px;background:#222"></div><div class="a" style="left:1798px;top:585px;width:11px;height:1px;background:#888"></div><div class="a" style="left:1798px;top:587px;width:11px;height:2px;background:#666"></div><div class="a" style="left:1798px;top:590px;width:11px;height:2px;background:#999"></div><div class="a" style="left:1798px;top:593px;width:11px;height:2px;background:#444"></div><div class="a" style="left:1798px;top:596px;width:11px;height:3px;background:#999"></div><div class="a ui" style="left:1762px;top:568px;font-size:10px;line-height:1;color:#000;font-weight:normal">A</div><div class="a ui" style="left:1798px;top:568px;font-size:10px;line-height:1;color:#000;">A</div><div class="a" style="left:1786px;top:561px;width:1px;height:47px;background:#bdbdbd"></div><div class="a" style="left:1761px;top:887px;width:50px;height:35px;background:#fff;border:1px solid #d8d8d8"></div><div class="a" style="left:1763px;top:895px;width:10px;height:3px;background:#999"></div><div class="a" style="left:1763px;top:899px;width:10px;height:3px;background:#111"></div><div class="a" style="left:1763px;top:903px;width:10px;height:2px;background:#888"></div><div class="a" style="left:1763px;top:906px;width:10px;height:3px;background:#222"></div><div class="a" style="left:1763px;top:910px;width:10px;height:2px;background:#666"></div><div class="a" style="left:1763px;top:913px;width:10px;height:3px;background:#444"></div><div class="a" style="left:1763px;top:917px;width:10px;height:2px;background:#666"></div><div class="a" style="left:1774px;top:895px;width:11px;height:1px;background:#999"></div><div class="a" style="left:1774px;top:897px;width:11px;height:3px;background:#111"></div><div class="a" style="left:1774px;top:901px;width:11px;height:2px;background:#999"></div><div class="a" style="left:1774px;top:904px;width:11px;height:1px;background:#999"></div><div class="a" style="left:1774px;top:906px;width:11px;height:1px;background:#666"></div><div class="a" style="left:1774px;top:908px;width:11px;height:1px;background:#888"></div><div class="a" style="left:1774px;top:910px;width:11px;height:2px;background:#999"></div><div class="a" style="left:1774px;top:913px;width:11px;height:1px;background:#111"></div><div class="a" style="left:1774px;top:915px;width:11px;height:2px;background:#111"></div><div class="a" style="left:1774px;top:918px;width:11px;height:2px;background:#999"></div><div class="a" style="left:1787px;top:895px;width:10px;height:2px;background:#222"></div><div class="a" style="left:1787px;top:898px;width:10px;height:2px;background:#111"></div><div class="a" style="left:1787px;top:901px;width:10px;height:1px;background:#222"></div><div class="a" style="left:1787px;top:903px;width:10px;height:1px;background:#111"></div><div class="a" style="left:1787px;top:905px;width:10px;height:2px;background:#111"></div><div class="a" style="left:1787px;top:908px;width:10px;height:1px;background:#222"></div><div class="a" style="left:1787px;top:910px;width:10px;height:2px;background:#444"></div><div class="a" style="left:1787px;top:913px;width:10px;height:2px;background:#999"></div><div class="a" style="left:1787px;top:916px;width:10px;height:2px;background:#666"></div><div class="a" style="left:1787px;top:919px;width:10px;height:1px;background:#999"></div><div class="a" style="left:1798px;top:895px;width:11px;height:1px;background:#111"></div><div class="a" style="left:1798px;top:897px;width:11px;height:1px;background:#444"></div><div class="a" style="left:1798px;top:899px;width:11px;height:3px;background:#666"></div><div class="a" style="left:1798px;top:903px;width:11px;height:1px;background:#222"></div><div class="a" style="left:1798px;top:905px;width:11px;height:1px;background:#888"></div><div class="a" style="left:1798px;top:907px;width:11px;height:2px;background:#666"></div><div class="a" style="left:1798px;top:910px;width:11px;height:3px;background:#111"></div><div class="a" style="left:1798px;top:914px;width:11px;height:3px;background:#111"></div><div class="a" style="left:1798px;top:918px;width:11px;height:1px;background:#999"></div><div class="a ui" style="left:1762px;top:888px;font-size:10px;line-height:1;color:#000;font-weight:normal">A</div><div class="a ui" style="left:1798px;top:888px;font-size:10px;line-height:1;color:#000;">A</div><div class="a" style="left:1786px;top:881px;width:1px;height:47px;background:#bdbdbd"></div><div class="a heb" style="left:1736px;top:930px;width:100px;text-align:center;font-family:Liberation Sans;font-size:11px;line-height:12px;color:#e0e0e0">לו-לז</div><div class="a" style="left:1761px;top:951px;width:50px;height:35px;background:#9ec8f5;border:1px solid #d8d8d8"></div><div class="a" style="left:1763px;top:959px;width:10px;height:3px;background:#4f86c6"></div><div class="a" style="left:1763px;top:963px;width:10px;height:2px;background:#3b6ea5"></div><div class="a" style="left:1763px;top:966px;width:10px;height:3px;background:#3b6ea5"></div><div class="a" style="left:1763px;top:970px;width:10px;height:2px;background:#4f86c6"></div><div class="a" style="left:1763px;top:973px;width:10px;height:2px;background:#2d5c8f"></div><div class="a" style="left:1763px;top:976px;width:10px;height:3px;background:#2d5c8f"></div><div class="a" style="left:1763px;top:980px;width:10px;height:2px;background:#2d5c8f"></div><div class="a" style="left:1763px;top:983px;width:10px;height:1px;background:#2d5c8f"></div><div class="a" style="left:1774px;top:959px;width:11px;height:2px;background:#4f86c6"></div><div class="a" style="left:1774px;top:962px;width:11px;height:2px;background:#3b6ea5"></div><div class="a" style="left:1774px;top:965px;width:11px;height:2px;background:#3b6ea5"></div><div class="a" style="left:1774px;top:968px;width:11px;height:1px;background:#2d5c8f"></div><div class="a" style="left:1774px;top:970px;width:11px;height:2px;background:#3b6ea5"></div><div class="a" style="left:1774px;top:973px;width:11px;height:2px;background:#2d5c8f"></div><div class="a" style="left:1774px;top:976px;width:11px;height:3px;background:#3b6ea5"></div><div class="a" style="left:1774px;top:980px;width:11px;height:1px;background:#3b6ea5"></div><div class="a" style="left:1774px;top:982px;width:11px;height:2px;background:#3b6ea5"></div><div class="a" style="left:1787px;top:959px;width:10px;height:3px;background:#4f86c6"></div><div class="a" style="left:1787px;top:963px;width:10px;height:1px;background:#2d5c8f"></div><div class="a" style="left:1787px;top:965px;width:10px;height:3px;background:#3b6ea5"></div><div class="a" style="left:1787px;top:969px;width:10px;height:2px;background:#2d5c8f"></div><div class="a" style="left:1787px;top:972px;width:10px;height:2px;background:#2d5c8f"></div><div class="a" style="left:1787px;top:975px;width:10px;height:1px;background:#2d5c8f"></div><div class="a" style="left:1787px;top:977px;width:10px;height:2px;background:#2d5c8f"></div><div class="a" style="left:1787px;top:980px;width:10px;height:1px;background:#4f86c6"></div><div class="a" style="left:1787px;top:982px;width:10px;height:3px;background:#2d5c8f"></div><div class="a" style="left:1798px;top:959px;width:11px;height:3px;background:#4f86c6"></div><div class="a" style="left:1798px;top:963px;width:11px;height:3px;background:#2d5c8f"></div><div class="a" style="left:1798px;top:967px;width:11px;height:1px;background:#2d5c8f"></div><div class="a" style="left:1798px;top:969px;width:11px;height:1px;background:#3b6ea5"></div><div class="a" style="left:1798px;top:971px;width:11px;height:2px;background:#4f86c6"></div><div class="a" style="left:1798px;top:974px;width:11px;height:2px;background:#2d5c8f"></div><div class="a" style="left:1798px;top:977px;width:11px;height:3px;background:#2d5c8f"></div><div class="a" style="left:1798px;top:981px;width:11px;height:2px;background:#3b6ea5"></div><div class="a ui" style="left:1762px;top:952px;font-size:10px;line-height:1;color:#000;font-weight:normal">A</div><div class="a ui" style="left:1798px;top:952px;font-size:10px;line-height:1;color:#000;">A</div><div class="a" style="left:1786px;top:945px;width:1px;height:47px;background:#bdbdbd"></div><div class="a" style="left:1764px;top:994px;width:41px;height:13px;background:#2d8ceb"></div><div class="a heb" style="left:1764px;top:994px;width:41px;text-align:center;font-size:12px;line-height:13px;color:#fff;font-weight:bold">לח-לט</div></div></div><div class="a" style="left:1667px;top:1006px;width:253px;height:26px;background:#535353;border-top:1px solid #474747"></div><div class="a ui" style="left:1672px;top:1016px;font-size:10.5px;line-height:1;color:#ececec;letter-spacing:-0.2px">76 Pages in 39 Spreads</div><svg class="a" style="left:1825px;top:1012px" width="20" height="16" viewBox="0 0 20 16"><rect x="1" y="6" width="9" height="8" fill="none" stroke="#bdbdbd" stroke-width="1.1"/><path d="M5 6 L5 2 L12 2 L12 10 L10 10" fill="none" stroke="#bdbdbd" stroke-width="1.1"/><circle cx="17" cy="14" r="1" fill="#bdbdbd"/></svg><svg class="a" style="left:1856px;top:1012px" width="13" height="13" viewBox="0 0 13 13"><rect x="0.5" y="0.5" width="12" height="12" fill="none" stroke="#bdbdbd" stroke-width="1.1"/><path d="M6.5 3 L6.5 10 M3 6.5 L10 6.5" stroke="#bdbdbd" stroke-width="1.2"/></svg><svg class="a" style="left:1883px;top:1012px" width="12" height="14" viewBox="0 0 12 14"><path d="M0.5 2 L11.5 2 M4 2 L4 0.5 L8 0.5 L8 2 M1.5 2.5 L2.5 13.5 L9.5 13.5 L10.5 2.5 M4 4 L4 12 M6 4 L6 12 M8 4 L8 12" fill="none" stroke="#bdbdbd" stroke-width="1"/></svg><svg class="a" style="left:1907px;top:996px" width="10" height="6" viewBox="0 0 10 6"><path d="M1 1 L5 5 L9 1" fill="none" stroke="#888"/></svg><div class="a" style="left:1667px;top:582px;width:240px;height:295px;background:#535353;box-shadow:0 0 3px rgba(0,0,0,0.5)"></div><div class="a" style="left:1667px;top:582px;width:240px;height:13px;background:#444"></div><svg class="a" style="left:1876px;top:585px" width="9" height="7" viewBox="0 0 9 7"><path d="M4 1 L1.5 3.5 L4 6 M7.5 1 L5 3.5 L7.5 6" fill="none" stroke="#cfcfcf" stroke-width="1.5"/></svg><svg class="a" style="left:1896px;top:585px" width="8" height="8" viewBox="0 0 8 8"><path d="M1 1 L7 7 M7 1 L1 7" stroke="#cfcfcf" stroke-width="1.8"/></svg><div class="a" style="left:1667px;top:595px;width:240px;height:27px;background:#434343"></div><div class="a" style="left:1667px;top:595px;width:83px;height:27px;background:#535353"></div><svg class="a" style="left:1673px;top:603px" width="8" height="12" viewBox="0 0 8 12"><path d="M1 4.5 L4 1.5 L7 4.5 M1 7.5 L4 10.5 L7 7.5" fill="none" stroke="#cfcfcf" stroke-width="1.1"/></svg><div class="a ui" style="left:1685px;top:603px;font-size:11.5px;line-height:1;color:#f2f2f2;font-weight:bold">Text Wrap</div><div class="a" style="left:1890px;top:605px;width:12px;height:9px;background:repeating-linear-gradient(180deg,#ccc 0 1px,transparent 1px 2px)"></div><div class="a" style="left:1673px;top:629px;width:22px;height:22px;background:#383838;border-radius:3px"></div><svg class="a" style="left:1676px;top:632px" width="16" height="16" viewBox="0 0 16 16"><path d="M1 2 L15 2 M1 5 L15 5 M1 8 L15 8 M1 11 L15 11 M1 14 L15 14" stroke="#d0d0d0" stroke-width="1.2"/><path d="M3 6.5 L13 6.5 M3 9.5 L13 9.5" stroke="#d0d0d0" stroke-width="1.2"/></svg><svg class="a" style="left:1705px;top:632px" width="16" height="16" viewBox="0 0 16 16"><path d="M1 2 L15 2 M1 14 L15 14 M1 5 L4 5 M12 5 L15 5 M1 8 L4 8 M12 8 L15 8 M1 11 L4 11 M12 11 L15 11" stroke="#d0d0d0" stroke-width="1.2"/><rect x="5.5" y="4.5" width="5" height="7" fill="none" stroke="#d0d0d0" stroke-width="1.1"/></svg><svg class="a" style="left:1734px;top:632px" width="16" height="16" viewBox="0 0 16 16"><path d="M1 2 L15 2 M1 14 L15 14 M1 5 L4 5 M12 5 L15 5 M1 11 L4 11 M12 11 L15 11" stroke="#d0d0d0" stroke-width="1.2"/><circle cx="8" cy="8" r="3.8" fill="#d0d0d0"/></svg><svg class="a" style="left:1763px;top:632px" width="16" height="16" viewBox="0 0 16 16"><path d="M1 2 L15 2 M1 14 L15 14" stroke="#d0d0d0" stroke-width="1.2"/><rect x="5" y="5" width="6" height="6" fill="#d0d0d0"/></svg><svg class="a" style="left:1792px;top:632px" width="16" height="16" viewBox="0 0 16 16"><path d="M1 2 L15 2 M1 5 L15 5" stroke="#d0d0d0" stroke-width="1.2"/><rect x="5" y="8" width="6" height="6" fill="#d0d0d0"/></svg><div class="a" style="left:1822px;top:632px;width:11px;height:11px;border:1px solid #6a6a6a;border-radius:2px"></div><div class="a ui" style="left:1841px;top:634px;font-size:11px;line-height:1;color:#8a8a8a;">Invert</div><div class="a" style="left:1672px;top:657px;width:230px;height:1px;background:#5f5f5f"></div><div class="a" style="left:1694px;top:663px;width:76px;height:21px;background:#4a4a4a;border-radius:2px"></div><div class="a" style="left:1694px;top:663px;width:17px;height:21px;background:#474747"></div><svg class="a" style="left:1698px;top:667px" width="9" height="13" viewBox="0 0 9 13"><path d="M1 4 L4.5 1 L8 4 M1 9 L4.5 12 L8 9" fill="none" stroke="#aaa" stroke-width="1"/></svg><div class="a ui" style="left:1716px;top:668px;font-size:11px;line-height:1;color:#e8e8e8;">0 mm</div><div class="a" style="left:1694px;top:689px;width:76px;height:21px;background:#4a4a4a;border-radius:2px"></div><div class="a" style="left:1694px;top:689px;width:17px;height:21px;background:#474747"></div><svg class="a" style="left:1698px;top:693px" width="9" height="13" viewBox="0 0 9 13"><path d="M1 4 L4.5 1 L8 4 M1 9 L4.5 12 L8 9" fill="none" stroke="#aaa" stroke-width="1"/></svg><div class="a ui" style="left:1716px;top:694px;font-size:11px;line-height:1;color:#e8e8e8;">0 mm</div><div class="a" style="left:1826px;top:663px;width:76px;height:21px;background:#4a4a4a;border-radius:2px"></div><div class="a" style="left:1826px;top:663px;width:17px;height:21px;background:#474747"></div><svg class="a" style="left:1830px;top:667px" width="9" height="13" viewBox="0 0 9 13"><path d="M1 4 L4.5 1 L8 4 M1 9 L4.5 12 L8 9" fill="none" stroke="#aaa" stroke-width="1"/></svg><div class="a ui" style="left:1848px;top:668px;font-size:11px;line-height:1;color:#e8e8e8;">0 mm</div><div class="a" style="left:1826px;top:689px;width:76px;height:21px;background:#4a4a4a;border-radius:2px"></div><div class="a" style="left:1826px;top:689px;width:17px;height:21px;background:#474747"></div><svg class="a" style="left:1830px;top:693px" width="9" height="13" viewBox="0 0 9 13"><path d="M1 4 L4.5 1 L8 4 M1 9 L4.5 12 L8 9" fill="none" stroke="#aaa" stroke-width="1"/></svg><div class="a ui" style="left:1848px;top:694px;font-size:11px;line-height:1;color:#e8e8e8;">0 mm</div><svg class="a" style="left:1676px;top:665px" width="14" height="17" viewBox="0 0 14 17"><path d="M1 1 L13 1 M7 1 L7 8 M5 4 L7 1.5 L9 4" fill="none" stroke="#bbb" stroke-width="1.1"/><rect x="3.5" y="8.5" width="7" height="7" fill="none" stroke="#bbb" stroke-width="1.1"/></svg><svg class="a" style="left:1676px;top:691px" width="14" height="17" viewBox="0 0 14 17"><path d="M1 16 L13 16 M7 16 L7 9 M5 13 L7 15.5 L9 13" fill="none" stroke="#bbb" stroke-width="1.1"/><rect x="3.5" y="1.5" width="7" height="7" fill="none" stroke="#bbb" stroke-width="1.1"/></svg><svg class="a" style="left:1807px;top:666px" width="17" height="14" viewBox="0 0 17 14"><path d="M1 1 L1 13 M1 7 L8 7 M4 5 L1.5 7 L4 9" fill="none" stroke="#bbb" stroke-width="1.1"/><rect x="8.5" y="3.5" width="7" height="7" fill="none" stroke="#bbb" stroke-width="1.1"/></svg><svg class="a" style="left:1807px;top:692px" width="17" height="14" viewBox="0 0 17 14"><path d="M16 1 L16 13 M16 7 L9 7 M13 5 L15.5 7 L13 9" fill="none" stroke="#bbb" stroke-width="1.1"/><rect x="1.5" y="3.5" width="7" height="7" fill="none" stroke="#bbb" stroke-width="1.1"/></svg><svg class="a" style="left:1780px;top:680px" width="15" height="17" viewBox="0 0 15 17"><path d="M4 7 L2.5 5.5 Q1 4 2.5 2.5 Q4 1 5.5 2.5 L8 5 M11 10 L12.5 11.5 Q14 13 12.5 14.5 Q11 16 9.5 14.5 L7 12 M3 15 L12 2" fill="none" stroke="#8a8a8a" stroke-width="1.2"/></svg><div class="a" style="left:1672px;top:715px;width:230px;height:1px;background:#5f5f5f"></div><div class="a ui" style="left:1672px;top:727px;font-size:10.5px;line-height:1;color:#9a9a9a;">Wrap Options:</div><div class="a ui" style="left:1695px;top:753px;font-size:10.5px;line-height:1;color:#9a9a9a;">Wrap To:</div><div class="a" style="left:1742px;top:747px;width:160px;height:21px;background:#4a4a4a;border-radius:2px"></div><div class="a ui" style="left:1746px;top:753px;font-size:10.5px;line-height:1;color:#e8e8e8;">Both Right &amp; Left Sides</div><svg class="a" style="left:1888px;top:756px" width="10" height="6"><path d="M1 1 L5.0 5 L9 1" stroke="#ccc" stroke-width="1.3" fill="none"/></svg><div class="a ui" style="left:1672px;top:779px;font-size:10.5px;line-height:1;color:#9a9a9a;">Contour Options:</div><div class="a ui" style="left:1710px;top:805px;font-size:10.5px;line-height:1;color:#9a9a9a;">Type:</div><div class="a" style="left:1742px;top:799px;width:160px;height:21px;background:#4a4a4a;border-radius:2px"></div><svg class="a" style="left:1888px;top:808px" width="10" height="6"><path d="M1 1 L5.0 5 L9 1" stroke="#ccc" stroke-width="1.3" fill="none"/></svg><div class="a" style="left:1673px;top:855px;width:11px;height:11px;border:1px solid #6a6a6a;border-radius:2px"></div><div class="a ui" style="left:1691px;top:856px;font-size:10.5px;line-height:1;color:#8a8a8a;">Include Inside Edges</div><div class="a" style="left:1070px;top:259px;width:483px;height:224px;background:#535353;border-radius:4px 4px 0 0;box-shadow:0 0 4px rgba(0,0,0,0.5)"></div><div class="a" style="left:1070px;top:259px;width:483px;height:14px;background:#3d3d3d;border-radius:4px 4px 0 0"></div><svg class="a" style="left:1298px;top:263px" width="9" height="7" viewBox="0 0 9 7"><path d="M4 1 L1.5 3.5 L4 6 M7.5 1 L5 3.5 L7.5 6" fill="none" stroke="#cfcfcf" stroke-width="1.5"/></svg><svg class="a" style="left:1523px;top:263px" width="9" height="7" viewBox="0 0 9 7"><path d="M4 1 L1.5 3.5 L4 6 M7.5 1 L5 3.5 L7.5 6" fill="none" stroke="#cfcfcf" stroke-width="1.5"/></svg><svg class="a" style="left:1542px;top:263px" width="8" height="8" viewBox="0 0 8 8"><path d="M1 1 L7 7 M7 1 L1 7" stroke="#cfcfcf" stroke-width="1.8"/></svg><div class="a" style="left:1070px;top:273px;width:483px;height:27px;background:#434343"></div><div class="a" style="left:1071px;top:273px;width:96px;height:27px;background:#535353"></div><svg class="a" style="left:1077px;top:281px" width="8" height="12" viewBox="0 0 8 12"><path d="M1 4.5 L4 1.5 L7 4.5 M1 7.5 L4 10.5 L7 7.5" fill="none" stroke="#cfcfcf" stroke-width="1.1"/></svg><div class="a ui" style="left:1089px;top:281px;font-size:11px;line-height:1;color:#f2f2f2;font-weight:bold">Object Styles</div><div class="a" style="left:1293px;top:283px;width:12px;height:9px;background:repeating-linear-gradient(180deg,#ccc 0 1px,transparent 1px 2px)"></div><div class="a" style="left:1311px;top:273px;width:3px;height:210px;background:#3a3a3a"></div><div class="a" style="left:1314px;top:273px;width:83px;height:27px;background:#474747"></div><div class="a ui" style="left:1325px;top:281px;font-size:11px;line-height:1;color:#9a9a9a;letter-spacing:-0.1px">Character Styl</div><div class="a" style="left:1397px;top:273px;width:116px;height:27px;background:#535353"></div><svg class="a" style="left:1403px;top:281px" width="8" height="12" viewBox="0 0 8 12"><path d="M1 4.5 L4 1.5 L7 4.5 M1 7.5 L4 10.5 L7 7.5" fill="none" stroke="#cfcfcf" stroke-width="1.1"/></svg><div class="a ui" style="left:1415px;top:281px;font-size:11px;line-height:1;color:#f2f2f2;font-weight:bold">Paragraph Styles</div><div class="a" style="left:1536px;top:283px;width:12px;height:9px;background:repeating-linear-gradient(180deg,#ccc 0 1px,transparent 1px 2px)"></div><div class="a ui" style="left:1076px;top:308px;font-size:11px;line-height:1;color:#eee;">[None]+</div><div class="a" style="left:1071px;top:326px;width:240px;height:21px;background:#4b6584"></div><div class="a ui" style="left:1109px;top:331px;font-size:11px;line-height:1;color:#f4f4f4;font-weight:bold">[None]+</div><div class="a" style="left:1071px;top:347px;width:238px;height:1px;background:#5b5b5b"></div><div class="a ui" style="left:1109px;top:353px;font-size:11px;line-height:1;color:#f4f4f4;">[Basic Graphics Frame]</div><div class="a" style="left:1071px;top:369px;width:238px;height:1px;background:#5b5b5b"></div><div class="a ui" style="left:1109px;top:375px;font-size:11px;line-height:1;color:#f4f4f4;">[Basic Text Frame]</div><div class="a" style="left:1071px;top:391px;width:238px;height:1px;background:#5b5b5b"></div><div class="a heb" style="left:1109px;top:396px;font-size:12px;line-height:12px;color:#eee">עיצוב ספרי קודש</div><div class="a" style="left:1071px;top:413px;width:238px;height:1px;background:#5b5b5b"></div><div class="a" style="left:1071px;top:325px;width:238px;height:1px;background:#5b5b5b"></div><div class="a ui" style="left:1319px;top:308px;font-size:11px;line-height:1;color:#eee;">(No Styles)</div><div class="a" style="left:1314px;top:325px;width:230px;height:1px;background:#5b5b5b"></div><div class="a ui" style="left:1349px;top:331px;font-size:11px;line-height:1;color:#eee;">[Basic Paragraph]</div><div class="a" style="left:1314px;top:347px;width:228px;height:1px;background:#5b5b5b"></div><div class="a heb" style="left:1349px;top:352px;font-size:12px;line-height:12px;color:#eee">סיכום</div><div class="a" style="left:1314px;top:369px;width:228px;height:1px;background:#5b5b5b"></div><div class="a heb" style="left:1349px;top:374px;font-size:12px;line-height:12px;color:#eee">לפני סיכום</div><div class="a" style="left:1314px;top:391px;width:228px;height:1px;background:#5b5b5b"></div><div class="a heb" style="left:1349px;top:396px;font-size:12px;line-height:12px;color:#eee">לפני כותרת</div><div class="a" style="left:1314px;top:413px;width:228px;height:1px;background:#5b5b5b"></div><div class="a heb" style="left:1349px;top:418px;font-size:12px;line-height:12px;color:#eee">כל הטקסט</div><div class="a" style="left:1314px;top:435px;width:228px;height:1px;background:#5b5b5b"></div><div class="a heb" style="left:1349px;top:440px;font-size:12px;line-height:12px;color:#eee">כותרת קטנה</div><div class="a" style="left:1314px;top:457px;width:228px;height:1px;background:#5b5b5b"></div><div class="a" style="left:1543px;top:326px;width:10px;height:130px;background:#4b4b4b"></div><div class="a" style="left:1543px;top:337px;width:9px;height:92px;background:#696969;border-radius:4px"></div><div class="a" style="left:1071px;top:457px;width:238px;height:1px;background:#5b5b5b"></div><div class="a" style="left:1314px;top:457px;width:239px;height:1px;background:#5b5b5b"></div><svg class="a" style="left:1292px;top:306px" width="10" height="14" viewBox="0 0 10 14"><path d="M7 0.5 L2 7.5 L5 7.5 L3 13.5 L8.5 5.5 L5.5 5.5 Z" fill="none" stroke="#bdbdbd" stroke-width="1.1"/></svg><svg class="a" style="left:1535px;top:306px" width="10" height="14" viewBox="0 0 10 14"><path d="M7 0.5 L2 7.5 L5 7.5 L3 13.5 L8.5 5.5 L5.5 5.5 Z" fill="none" stroke="#bdbdbd" stroke-width="1.1"/></svg><svg class="a" style="left:1286px;top:330px" width="13" height="12" viewBox="0 0 13 12"><path d="M1 1 L11 11" stroke="#bdbdbd" stroke-width="1.2"/><path d="M1.5 11 L2.5 8 L9 1.5 L11.5 4 L5 10.5 Z" fill="#bdbdbd"/><path d="M1 1 L11 11" stroke="#4b6584" stroke-width="2.5"/><path d="M1 1 L11.5 11.5" stroke="#bdbdbd" stroke-width="1"/></svg><svg class="a" style="left:1286px;top:374px" width="12" height="12" viewBox="0 0 12 12"><rect x="0.5" y="0.5" width="11" height="11" fill="none" stroke="#bdbdbd" stroke-width="1.2"/><path d="M0.5 3.5 Q3 3 3.5 0.5 M8.5 0.5 Q9 3 11.5 3.5 M11.5 8.5 Q9 9 8.5 11.5 M3.5 11.5 Q3 9 0.5 8.5" fill="none" stroke="#bdbdbd" stroke-width="1"/><path d="M3.5 3.5 L8.5 3.5 M6 3.5 L6 8.5 M4.5 8.5 L7.5 8.5" stroke="#bdbdbd" stroke-width="1.1"/></svg><svg class="a" style="left:1286px;top:396px" width="12" height="12" viewBox="0 0 12 12"><rect x="0.5" y="0.5" width="11" height="11" fill="none" stroke="#bdbdbd" stroke-width="1.2"/><path d="M0.5 3.5 Q3 3 3.5 0.5 M8.5 0.5 Q9 3 11.5 3.5 M11.5 8.5 Q9 9 8.5 11.5 M3.5 11.5 Q3 9 0.5 8.5" fill="none" stroke="#bdbdbd" stroke-width="1"/></svg><div class="a ui" style="left:1503px;top:307px;font-size:12px;line-height:1;color:#bdbdbd;letter-spacing:-0.5px">[a+]</div><svg class="a" style="left:1163px;top:463px" width="14" height="12" viewBox="0 0 14 12"><path d="M0.5 1 L5 1 L6.5 2.5 L13.5 2.5 L13.5 11.5 L0.5 11.5 Z" fill="#bdbdbd"/></svg><svg class="a" style="left:1249px;top:463px" width="12" height="12" viewBox="0 0 12 12"><rect x="0.5" y="0.5" width="11" height="11" fill="none" stroke="#bdbdbd" stroke-width="1.1"/><path d="M6 3 L6 9 M3 6 L9 6" stroke="#bdbdbd" stroke-width="1.2"/></svg><svg class="a" style="left:1276px;top:463px" width="12" height="13" viewBox="0 0 12 13"><path d="M0.5 2 L11.5 2 M4 2 L4 0.5 L8 0.5 L8 2 M1.5 2.5 L2.5 12.5 L9.5 12.5 L10.5 2.5 M4 4 L4 11 M6 4 L6 11 M8 4 L8 11" fill="none" stroke="#8a8a8a" stroke-width="1"/></svg><svg class="a" style="left:1188px;top:463px" width="20" height="14" viewBox="0 0 20 14"><rect x="1" y="1" width="8" height="8" fill="#fff" stroke="#bdbdbd"/><rect x="4" y="4" width="8" height="8" fill="#111" stroke="#bdbdbd"/><path d="M15 6 Q18 6 18 9 Q18 12 15 12 M15 4 L13 6 L15 8" fill="none" stroke="#bdbdbd"/></svg><svg class="a" style="left:1217px;top:463px" width="20" height="12" viewBox="0 0 20 12"><rect x="1" y="1" width="9" height="9" fill="none" stroke="#bdbdbd" stroke-dasharray="2 1"/><path d="M12 11 L19 2 M13 5 L17 9" stroke="#bdbdbd"/></svg><svg class="a" style="left:1322px;top:463px" width="14" height="14" viewBox="0 0 14 14"><path d="M4 1 L13 1 L13 13 L4 13 M1 8 L9 8 M6 5 L9 8 L6 11" fill="none" stroke="#8a8a8a" stroke-width="1.2"/></svg><svg class="a" style="left:1434px;top:463px" width="14" height="12" viewBox="0 0 14 12"><path d="M0.5 1 L5 1 L6.5 2.5 L13.5 2.5 L13.5 11.5 L0.5 11.5 Z" fill="#bdbdbd"/></svg><svg class="a" style="left:1492px;top:463px" width="12" height="12" viewBox="0 0 12 12"><rect x="0.5" y="0.5" width="11" height="11" fill="none" stroke="#bdbdbd" stroke-width="1.1"/><path d="M6 3 L6 9 M3 6 L9 6" stroke="#bdbdbd" stroke-width="1.2"/></svg><svg class="a" style="left:1519px;top:463px" width="12" height="13" viewBox="0 0 12 13"><path d="M0.5 2 L11.5 2 M4 2 L4 0.5 L8 0.5 L8 2 M1.5 2.5 L2.5 12.5 L9.5 12.5 L10.5 2.5 M4 4 L4 11 M6 4 L6 11 M8 4 L8 11" fill="none" stroke="#8a8a8a" stroke-width="1"/></svg><div class="a ui" style="left:1461px;top:462px;font-size:14px;line-height:1;color:#8a8a8a;">¶</div><svg class="a" style="left:1470px;top:465px" width="9" height="9" viewBox="0 0 9 9"><path d="M1 8 L8 1 M2 3 L7 7" stroke="#8a8a8a"/></svg><svg class="a" style="left:1545px;top:330px" width="9" height="6" viewBox="0 0 9 6"><path d="M1 5 L4.5 1 L8 5" fill="none" stroke="#888"/></svg><svg class="a" style="left:1545px;top:449px" width="9" height="6" viewBox="0 0 9 6"><path d="M1 1 L4.5 5 L8 1" fill="none" stroke="#888"/></svg><div class="a" style="left:1066px;top:484px;width:479px;height:502px;background:#535353;border:1px solid #6a6a6a;box-shadow:0 0 6px rgba(0,0,0,0.4)"></div><div class="a" style="left:1066px;top:484px;width:479px;height:28px;background:#fff;border:1px solid #ddd"></div><div class="a ui" style="left:1073px;top:491px;font-size:12px;line-height:1;color:#8a8a8a;">Find/Change</div><div class="a" style="left:1524px;top:489px;width:18px;height:18px;background:#eee"></div><svg class="a" style="left:1529px;top:494px" width="8" height="8"><path d="M1 1 L7 7 M7 1 L1 7" stroke="#bbb" stroke-width="1"/></svg><div class="a ui" style="left:1083px;top:532px;font-size:12px;line-height:1;color:#eee;"><u>Q</u>uery:</div><div class="a" style="left:1128px;top:528px;width:266px;height:20px;background:#434343;border:1px solid #5e5e5e;border-radius:3px"></div><div class="a ui" style="left:1132px;top:531px;font-size:12px;line-height:1;color:#f0f0f0;">[Custom]</div><svg class="a" style="left:1380px;top:535px" width="10" height="6"><path d="M1 1 L5.0 5 L9 1" stroke="#ccc" stroke-width="1.3" fill="none"/></svg><div class="a" style="left:1082px;top:564px;width:446px;height:365px;border:1px solid #5f5f5f;border-radius:2px"></div><div class="a" style="left:1124px;top:554px;width:360px;height:20px;background:#535353;border:1px solid #6a6a6a;border-radius:3px"></div><div class="a" style="left:1125px;top:555px;width:46px;height:18px;color:#f0f0f0;font-size:12px;line-height:18px;text-align:center">Text</div><div class="a" style="left:1171px;top:555px;width:53px;height:18px;background:#323232"></div><div class="a" style="left:1171px;top:555px;width:53px;height:18px;color:#59a8ff;font-size:12px;line-height:18px;text-align:center">GREP</div><div class="a" style="left:1171px;top:555px;width:1px;height:18px;background:#6a6a6a"></div><div class="a" style="left:1224px;top:555px;width:53px;height:18px;color:#f0f0f0;font-size:12px;line-height:18px;text-align:center">Glyph</div><div class="a" style="left:1224px;top:555px;width:1px;height:18px;background:#6a6a6a"></div><div class="a" style="left:1277px;top:555px;width:62px;height:18px;color:#f0f0f0;font-size:12px;line-height:18px;text-align:center">Object</div><div class="a" style="left:1277px;top:555px;width:1px;height:18px;background:#6a6a6a"></div><div class="a" style="left:1339px;top:555px;width:51px;height:18px;color:#f0f0f0;font-size:12px;line-height:18px;text-align:center">Color</div><div class="a" style="left:1339px;top:555px;width:1px;height:18px;background:#6a6a6a"></div><div class="a" style="left:1390px;top:555px;width:93px;height:18px;color:#f0f0f0;font-size:12px;line-height:18px;text-align:center">Transliterate</div><div class="a" style="left:1390px;top:555px;width:1px;height:18px;background:#6a6a6a"></div><div class="a" style="left:1383px;top:553px;width:7px;height:7px;background:#1473e6;border-radius:50%"></div><div class="a ui" style="left:1097px;top:594px;font-size:12px;line-height:1;color:#eee;"><u>F</u>ind what:</div><div class="a" style="left:1097px;top:613px;width:251px;height:20px;background:#434343;border:1px solid #5e5e5e;border-radius:3px"></div><div class="a" style="left:1330px;top:613px;width:1px;height:20px;background:#5e5e5e"></div><div class="a ui" style="left:1101px;top:617px;font-size:12px;line-height:1;color:#f0f0f0;">~a</div><svg class="a" style="left:1334px;top:619px" width="10" height="6"><path d="M1 1 L5.0 5 L9 1" stroke="#ccc" stroke-width="1.3" fill="none"/></svg><div class="a ui" style="left:1097px;top:644px;font-size:12px;line-height:1;color:#eee;"><u>C</u>hange to:</div><div class="a" style="left:1097px;top:663px;width:251px;height:20px;background:#434343;border:1px solid #5e5e5e;border-radius:3px"></div><div class="a" style="left:1330px;top:663px;width:1px;height:20px;background:#5e5e5e"></div><svg class="a" style="left:1334px;top:669px" width="10" height="6"><path d="M1 1 L5.0 5 L9 1" stroke="#ccc" stroke-width="1.3" fill="none"/></svg><div class="a ui" style="left:1097px;top:694px;font-size:12px;line-height:1;color:#eee;"><u>S</u>earch:</div><div class="a" style="left:1148px;top:690px;width:168px;height:20px;background:#434343;border:1px solid #5e5e5e;border-radius:3px"></div><div class="a ui" style="left:1152px;top:694px;font-size:12px;line-height:1;color:#f0f0f0;">Document</div><svg class="a" style="left:1302px;top:697px" width="10" height="6"><path d="M1 1 L5.0 5 L9 1" stroke="#ccc" stroke-width="1.3" fill="none"/></svg><div class="a" style="left:1221px;top:716px;width:24px;height:20px;background:#323232;border-radius:3px"></div><svg class="a" style="left:1405px;top:529px" width="17" height="15" viewBox="0 0 17 15"><path d="M8.5 0.5 L8.5 7 M5 4 L8.5 7.5 L12 4" fill="none" stroke="#bdbdbd" stroke-width="2"/><rect x="0.5" y="9" width="16" height="5.5" fill="#bdbdbd"/><rect x="3" y="11" width="3" height="1.5" fill="#535353"/></svg><svg class="a" style="left:1438px;top:530px" width="12" height="14" viewBox="0 0 12 14"><path d="M0.5 2 L11.5 2 M4 2 L4 0.5 L8 0.5 L8 2 M1.5 2.5 L2.5 13.5 L9.5 13.5 L10.5 2.5 M4 4 L4 12 M6 4 L6 12 M8 4 L8 12" fill="none" stroke="#8a8a8a" stroke-width="1"/></svg><div class="a ui" style="left:1357px;top:614px;font-size:15px;line-height:1;color:#c4c4c4;">@</div><svg class="a" style="left:1371px;top:623px" width="5" height="7" viewBox="0 0 5 7"><path d="M0.5 0.5 L4.5 3.5 L0.5 6.5 Z" fill="#c4c4c4"/></svg><div class="a ui" style="left:1357px;top:664px;font-size:15px;line-height:1;color:#c4c4c4;">@</div><svg class="a" style="left:1371px;top:673px" width="5" height="7" viewBox="0 0 5 7"><path d="M0.5 0.5 L4.5 3.5 L0.5 6.5 Z" fill="#c4c4c4"/></svg><svg class="a" style="left:1355px;top:766px" width="18" height="15" viewBox="0 0 18 15"><path d="M1 3 L9 3 M5 3 L5 13 M3 13 L7 13" stroke="#bdbdbd" stroke-width="1.6"/><circle cx="11" cy="5" r="3.5" fill="none" stroke="#bdbdbd" stroke-width="1.1"/><path d="M13.5 7.5 L17 11" stroke="#bdbdbd" stroke-width="1.2"/></svg><svg class="a" style="left:1355px;top:855px" width="18" height="15" viewBox="0 0 18 15"><path d="M1 3 L9 3 M5 3 L5 13 M3 13 L7 13" stroke="#bdbdbd" stroke-width="1.6"/><circle cx="11" cy="5" r="3.5" fill="none" stroke="#bdbdbd" stroke-width="1.1"/><path d="M13.5 7.5 L17 11" stroke="#bdbdbd" stroke-width="1.2"/></svg><svg class="a" style="left:1357px;top:801px" width="11" height="12" viewBox="0 0 11 12"><path d="M0.5 2 L10.5 2 M3.5 2 L3.5 0.5 L7.5 0.5 L7.5 2 M1.5 2.5 L2.3 11.5 L8.7 11.5 L9.5 2.5 M4 4 L4 10 M5.5 4 L5.5 10 M7 4 L7 10" fill="none" stroke="#8a8a8a" stroke-width="0.9"/></svg><svg class="a" style="left:1357px;top:890px" width="11" height="12" viewBox="0 0 11 12"><path d="M0.5 2 L10.5 2 M3.5 2 L3.5 0.5 L7.5 0.5 L7.5 2 M1.5 2.5 L2.3 11.5 L8.7 11.5 L9.5 2.5 M4 4 L4 10 M5.5 4 L5.5 10 M7 4 L7 10" fill="none" stroke="#8a8a8a" stroke-width="0.9"/></svg><svg class="a" style="left:1100px;top:718px" width="18" height="16" viewBox="0 0 18 16"><path d="M1 5 L7.5 1.5 L14 5 L7.5 8.5 Z" fill="#bdbdbd"/><path d="M1 9 L7.5 12.5 L10 11" fill="none" stroke="#bdbdbd" stroke-width="1.5"/><rect x="10" y="9" width="7" height="6.5" fill="#bdbdbd"/><path d="M11.5 9 L11.5 7 Q13.5 4.5 15.5 7 L15.5 9" fill="none" stroke="#bdbdbd" stroke-width="1.2"/></svg><svg class="a" style="left:1131px;top:718px" width="18" height="16" viewBox="0 0 18 16"><rect x="1" y="1" width="10" height="13" fill="none" stroke="#bdbdbd" stroke-width="1.1"/><path d="M3 6 L9 6 M3 8 L9 8 M3 10 L7 10" stroke="#bdbdbd"/><rect x="10" y="9" width="7" height="6.5" fill="#bdbdbd"/><path d="M11.5 9 L11.5 7 Q13.5 4.5 15.5 7 L15.5 9" fill="none" stroke="#bdbdbd" stroke-width="1.2"/></svg><svg class="a" style="left:1163px;top:718px" width="17" height="15" viewBox="0 0 17 15"><path d="M1 5 L8.5 1.5 L16 5 L8.5 8.5 Z" fill="#bdbdbd"/><path d="M2.5 9.5 L8.5 13 L14.5 9.5" fill="none" stroke="#8a8a8a" stroke-width="1.1"/></svg><svg class="a" style="left:1193px;top:717px" width="18" height="17" viewBox="0 0 18 17"><rect x="1" y="3" width="7.5" height="11" fill="#bdbdbd"/><rect x="9.5" y="3" width="7.5" height="11" fill="#bdbdbd"/><path d="M9 0 L9 17" stroke="#bdbdbd"/><path d="M2.5 12 L4.7 6 L7 12 M11 12 L13.2 6 L15.5 12" fill="none" stroke="#535353" stroke-width="0.9"/></svg><svg class="a" style="left:1225px;top:718px" width="15" height="15" viewBox="0 0 15 15"><rect x="1" y="1" width="13" height="13" fill="none" stroke="#bdbdbd" stroke-width="1.2"/><rect x="2.5" y="2.5" width="10" height="6" fill="#222"/><path d="M4 4.5 L11 4.5 M4 6.5 L9 6.5" stroke="#bdbdbd"/><rect x="3" y="10.5" width="9" height="2" fill="#bdbdbd"/></svg><div class="a ui" style="left:1097px;top:747px;font-size:12px;line-height:1;color:#eee;">Find Format:</div><div class="a" style="left:1097px;top:763px;width:252px;height:54px;border:1px solid #5e5e5e"></div><div class="a ui" style="left:1097px;top:836px;font-size:12px;line-height:1;color:#eee;">Change Format:</div><div class="a" style="left:1097px;top:852px;width:252px;height:54px;border:1px solid #5e5e5e"></div><div class="a" style="left:1407px;top:601px;width:106px;height:76px;border:1px solid #5e5e5e;border-radius:3px"></div><div class="a" style="left:1418px;top:593px;width:60px;height:14px;background:#535353"></div><div class="a ui" style="left:1422px;top:594px;font-size:12px;line-height:1;color:#f0f0f0;">Direction</div><div class="a" style="left:1423px;top:619px;width:13px;height:13px;border:1px solid #bbb;border-radius:50%;background:#ccc"></div><div class="a" style="left:1427px;top:623px;width:5px;height:5px;background:#444;border-radius:50%"></div><div class="a ui" style="left:1443px;top:620px;font-size:12px;line-height:1;color:#f0f0f0;">Forward</div><div class="a" style="left:1423px;top:643px;width:13px;height:13px;border:1px solid #bbb;border-radius:50%"></div><div class="a ui" style="left:1443px;top:644px;font-size:12px;line-height:1;color:#f0f0f0;">Backward</div><div class="a" style="left:1407px;top:688px;width:107px;height:26px;border:2px solid #f0f0f0;border-radius:13px;color:#f4f4f4;font-size:12px;line-height:22px;text-align:center">Fi<u>n</u>d Next</div><div class="a" style="left:1407px;top:720px;width:107px;height:25px;background:#575757;border-radius:13px;color:#8a8a8a;font-size:12px;line-height:25px;text-align:center">C<u>h</u>ange</div><div class="a" style="left:1407px;top:750px;width:107px;height:26px;border:1px solid #f0f0f0;border-radius:13px;color:#f4f4f4;font-size:12px;line-height:24px;text-align:center">Change <u>A</u>ll</div><div class="a" style="left:1407px;top:781px;width:107px;height:26px;background:#575757;border-radius:13px;color:#8a8a8a;font-size:12px;line-height:26px;text-align:center">Chang<u>e</u>/Find</div><div class="a" style="left:1407px;top:817px;width:107px;height:26px;border:1px solid #f0f0f0;border-radius:13px;color:#f4f4f4;font-size:12px;line-height:24px;text-align:center">Fewer <u>O</u>ptions</div><div class="a" style="left:1439px;top:945px;width:90px;height:26px;border:1px solid #f0f0f0;border-radius:13px;color:#f4f4f4;font-size:12px;line-height:24px;text-align:center"><u>D</u>one</div></body></html>
